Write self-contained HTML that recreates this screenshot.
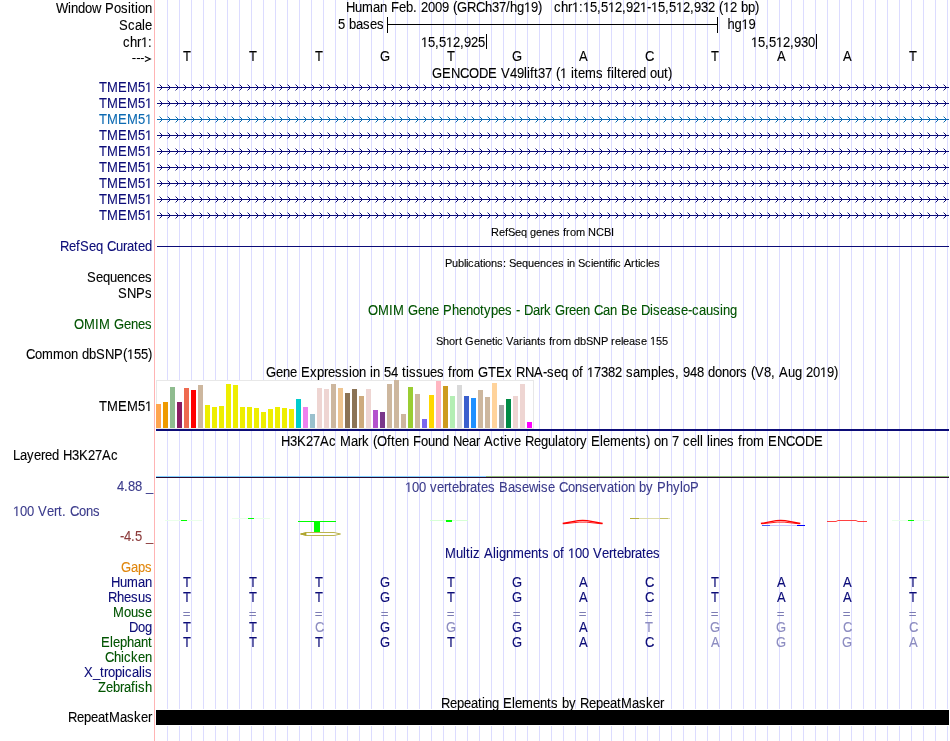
<!DOCTYPE html>
<html><head><meta charset="utf-8"><style>
html,body{margin:0;padding:0;background:#fff;width:950px;height:741px;overflow:hidden}
svg{display:block;will-change:transform}
text{font-family:"Liberation Sans",sans-serif}
</style></head><body>
<svg width="950" height="741" viewBox="0 0 950 741">
<path d="M167,0V380M167,429V709M167,726V741M179,0V380M179,429V709M179,726V741M191,0V380M191,429V709M191,726V741M203,0V380M203,429V709M203,726V741M215,0V380M215,429V709M215,726V741M227,0V380M227,429V709M227,726V741M239,0V380M239,429V709M239,726V741M251,0V380M251,429V709M251,726V741M263,0V380M263,429V709M263,726V741M275,0V380M275,429V709M275,726V741M287,0V380M287,429V709M287,726V741M299,0V380M299,429V709M299,726V741M311,0V380M311,429V709M311,726V741M323,0V380M323,429V709M323,726V741M335,0V380M335,429V709M335,726V741M347,0V380M347,429V709M347,726V741M359,0V380M359,429V709M359,726V741M371,0V380M371,429V709M371,726V741M383,0V380M383,429V709M383,726V741M395,0V380M395,429V709M395,726V741M407,0V380M407,429V709M407,726V741M419,0V380M419,429V709M419,726V741M431,0V380M431,429V709M431,726V741M443,0V380M443,429V709M443,726V741M455,0V380M455,429V709M455,726V741M467,0V380M467,429V709M467,726V741M479,0V380M479,429V709M479,726V741M491,0V380M491,429V709M491,726V741M503,0V380M503,429V709M503,726V741M515,0V380M515,429V709M515,726V741M527,0V380M527,429V709M527,726V741M539,0V709M539,726V741M551,0V709M551,726V741M563,0V709M563,726V741M575,0V709M575,726V741M587,0V709M587,726V741M599,0V709M599,726V741M611,0V709M611,726V741M623,0V709M623,726V741M635,0V709M635,726V741M647,0V709M647,726V741M659,0V709M659,726V741M671,0V709M671,726V741M683,0V709M683,726V741M695,0V709M695,726V741M707,0V709M707,726V741M719,0V709M719,726V741M731,0V709M731,726V741M743,0V709M743,726V741M755,0V709M755,726V741M767,0V709M767,726V741M779,0V709M779,726V741M791,0V709M791,726V741M803,0V709M803,726V741M815,0V709M815,726V741M827,0V709M827,726V741M839,0V709M839,726V741M851,0V709M851,726V741M863,0V709M863,726V741M875,0V709M875,726V741M887,0V709M887,726V741M899,0V709M899,726V741M911,0V709M911,726V741M923,0V709M923,726V741M935,0V709M935,726V741M947,0V709M947,726V741" transform="translate(0.5,0)" stroke="#dcdcff" stroke-width="1" fill="none"/>
<rect x="154" y="0" width="1" height="741" fill="#ffb4b4" />
<text x="56 68 71 78 85 92 101 105 114 121 128 131 135 138 145" y="13" font-size="13" fill="#000" stroke="#000" stroke-width="0.1" transform="matrix(1,0,0,1.07,0,-0.910)" >Window Position</text>
<text x="119 128 135 142 145" y="30" font-size="13" fill="#000" stroke="#000" stroke-width="0.1" transform="matrix(1,0,0,1.07,0,-2.100)" >Scale</text>
<path d="M515,0L515,1237L197,1010L197,1180L530,1409L696,1409L696,0Z" fill="#000" stroke="#000" stroke-width="15.75" transform="matrix(0.006348,0,0,-0.006792,141,47)"/>
<text x="123 130 137 148" y="47" font-size="13" fill="#000" stroke="#000" stroke-width="0.1" transform="matrix(1,0,0,1.07,0,-3.290)" >chr:</text>
<rect x="132.3" y="58" width="3.3" height="1.05" fill="#000" />
<rect x="136.8" y="58" width="3.2" height="1.05" fill="#000" />
<rect x="140.8" y="58" width="3.0" height="1.05" fill="#000" />
<path d="M144.9,56.4 L150.3,58.9 L144.9,61.4" fill="none" stroke="#000" stroke-width="1.15"/>
<path d="M515,0L515,1237L197,1010L197,1180L530,1409L696,1409L696,0Z" fill="#000" stroke="#000" stroke-width="15.75" transform="matrix(0.006348,0,0,-0.006792,524,12)"/>
<text x="346 355 362 373 380 387 391 399 406 413 417 421 428 435 442 449 453 457 467 476 485 492 499 506 510 517 531 538" y="12" font-size="13" fill="#000" stroke="#000" stroke-width="0.1" transform="matrix(1,0,0,1.07,0,-0.840)" >Human Feb. 2009 (GRCh37/hg9)</text>
<path d="M515,0L515,1237L197,1010L197,1180L530,1409L696,1409L696,0Z" fill="#000" stroke="#000" stroke-width="15.75" transform="matrix(0.006348,0,0,-0.006792,572,12)"/>
<path d="M515,0L515,1237L197,1010L197,1180L530,1409L696,1409L696,0Z" fill="#000" stroke="#000" stroke-width="15.75" transform="matrix(0.006348,0,0,-0.006792,583,12)"/>
<path d="M515,0L515,1237L197,1010L197,1180L530,1409L696,1409L696,0Z" fill="#000" stroke="#000" stroke-width="15.75" transform="matrix(0.006348,0,0,-0.006792,608,12)"/>
<path d="M515,0L515,1237L197,1010L197,1180L530,1409L696,1409L696,0Z" fill="#000" stroke="#000" stroke-width="15.75" transform="matrix(0.006348,0,0,-0.006792,640,12)"/>
<path d="M515,0L515,1237L197,1010L197,1180L530,1409L696,1409L696,0Z" fill="#000" stroke="#000" stroke-width="15.75" transform="matrix(0.006348,0,0,-0.006792,651,12)"/>
<path d="M515,0L515,1237L197,1010L197,1180L530,1409L696,1409L696,0Z" fill="#000" stroke="#000" stroke-width="15.75" transform="matrix(0.006348,0,0,-0.006792,676,12)"/>
<path d="M515,0L515,1237L197,1010L197,1180L530,1409L696,1409L696,0Z" fill="#000" stroke="#000" stroke-width="15.75" transform="matrix(0.006348,0,0,-0.006792,723,12)"/>
<text x="554 561 568 579 590 597 601 615 622 626 633 647 658 665 669 683 690 694 701 708 715 719 730 737 741 748 755" y="12" font-size="13" fill="#000" stroke="#000" stroke-width="0.1" transform="matrix(1,0,0,1.07,0,-0.840)" >chr:5,52,92-5,52,932 (2 bp)</text>
<text x="338 345 349 356 363 370 377" y="29" font-size="13" fill="#000" stroke="#000" stroke-width="0.1" transform="matrix(1,0,0,1.07,0,-2.030)" >5 bases</text>
<rect x="387" y="17" width="1" height="16" fill="#000" />
<rect x="387" y="24" width="331" height="1" fill="#000" />
<rect x="717" y="17" width="1" height="16" fill="#000" />
<path d="M515,0L515,1237L197,1010L197,1180L530,1409L696,1409L696,0Z" fill="#000" stroke="#000" stroke-width="15.75" transform="matrix(0.006348,0,0,-0.006792,741.5,29)"/>
<text x="727.5 734.5 748.5" y="29" font-size="13" fill="#000" stroke="#000" stroke-width="0.1" transform="matrix(1,0,0,1.07,0,-2.030)" >hg9</text>
<path d="M515,0L515,1237L197,1010L197,1180L530,1409L696,1409L696,0Z" fill="#000" stroke="#000" stroke-width="15.75" transform="matrix(0.006348,0,0,-0.006792,421,47)"/>
<path d="M515,0L515,1237L197,1010L197,1180L530,1409L696,1409L696,0Z" fill="#000" stroke="#000" stroke-width="15.75" transform="matrix(0.006348,0,0,-0.006792,446,47)"/>
<text x="428 435 439 453 460 464 471 478" y="47" font-size="13" fill="#000" stroke="#000" stroke-width="0.1" transform="matrix(1,0,0,1.07,0,-3.290)" >5,52,925</text>
<rect x="486" y="34" width="1" height="15" fill="#000" />
<path d="M515,0L515,1237L197,1010L197,1180L530,1409L696,1409L696,0Z" fill="#000" stroke="#000" stroke-width="15.75" transform="matrix(0.006348,0,0,-0.006792,751,47)"/>
<path d="M515,0L515,1237L197,1010L197,1180L530,1409L696,1409L696,0Z" fill="#000" stroke="#000" stroke-width="15.75" transform="matrix(0.006348,0,0,-0.006792,776,47)"/>
<text x="758 765 769 783 790 794 801 808" y="47" font-size="13" fill="#000" stroke="#000" stroke-width="0.1" transform="matrix(1,0,0,1.07,0,-3.290)" >5,52,930</text>
<rect x="816" y="34" width="1" height="15" fill="#000" />
<text x="183" y="61" font-size="13" fill="#000" stroke="#000" stroke-width="0.1" transform="matrix(1,0,0,1.07,0,-4.270)" >T</text>
<text x="249" y="61" font-size="13" fill="#000" stroke="#000" stroke-width="0.1" transform="matrix(1,0,0,1.07,0,-4.270)" >T</text>
<text x="315" y="61" font-size="13" fill="#000" stroke="#000" stroke-width="0.1" transform="matrix(1,0,0,1.07,0,-4.270)" >T</text>
<text x="380" y="61" font-size="13" fill="#000" stroke="#000" stroke-width="0.1" transform="matrix(1,0,0,1.07,0,-4.270)" >G</text>
<text x="447" y="61" font-size="13" fill="#000" stroke="#000" stroke-width="0.1" transform="matrix(1,0,0,1.07,0,-4.270)" >T</text>
<text x="512" y="61" font-size="13" fill="#000" stroke="#000" stroke-width="0.1" transform="matrix(1,0,0,1.07,0,-4.270)" >G</text>
<text x="579" y="61" font-size="13" fill="#000" stroke="#000" stroke-width="0.1" transform="matrix(1,0,0,1.07,0,-4.270)" >A</text>
<text x="645" y="61" font-size="13" fill="#000" stroke="#000" stroke-width="0.1" transform="matrix(1,0,0,1.07,0,-4.270)" >C</text>
<text x="711" y="61" font-size="13" fill="#000" stroke="#000" stroke-width="0.1" transform="matrix(1,0,0,1.07,0,-4.270)" >T</text>
<text x="777" y="61" font-size="13" fill="#000" stroke="#000" stroke-width="0.1" transform="matrix(1,0,0,1.07,0,-4.270)" >A</text>
<text x="843" y="61" font-size="13" fill="#000" stroke="#000" stroke-width="0.1" transform="matrix(1,0,0,1.07,0,-4.270)" >A</text>
<text x="909" y="61" font-size="13" fill="#000" stroke="#000" stroke-width="0.1" transform="matrix(1,0,0,1.07,0,-4.270)" >T</text>
<path d="M515,0L515,1237L197,1010L197,1180L530,1409L696,1409L696,0Z" fill="#000" stroke="#000" stroke-width="15.75" transform="matrix(0.006348,0,0,-0.006792,560,78)"/>
<text x="432 442 451 460 469 479 488 497 501 510 517 524 527 530 534 538 545 552 556 567 571 574 578 585 596 603 607 611 614 617 621 628 632 639 646 650 657 664 668" y="78" font-size="13" fill="#000" stroke="#000" stroke-width="0.1" transform="matrix(1,0,0,1.07,0,-5.460)" >GENCODE V49lift37 ( items filtered out)</text>
<path d="M515,0L515,1237L197,1010L197,1180L530,1409L696,1409L696,0Z" fill="#0c0c78" stroke="#0c0c78" stroke-width="15.75" transform="matrix(0.006348,0,0,-0.006792,145,92)"/>
<text x="99 107 118 127 138" y="92" font-size="13" fill="#0c0c78" stroke="#0c0c78" stroke-width="0.1" transform="matrix(1,0,0,1.07,0,-6.440)" >TMEM5</text>
<rect x="157" y="87" width="792" height="1" fill="#0c0c78" />
<path d="M160,85h1v1h-1zM161,86h1v3h-1zM160,89h1v1h-1zM168,85h1v1h-1zM169,86h1v3h-1zM168,89h1v1h-1zM176,85h1v1h-1zM177,86h1v3h-1zM176,89h1v1h-1zM184,85h1v1h-1zM185,86h1v3h-1zM184,89h1v1h-1zM192,85h1v1h-1zM193,86h1v3h-1zM192,89h1v1h-1zM200,85h1v1h-1zM201,86h1v3h-1zM200,89h1v1h-1zM208,85h1v1h-1zM209,86h1v3h-1zM208,89h1v1h-1zM216,85h1v1h-1zM217,86h1v3h-1zM216,89h1v1h-1zM224,85h1v1h-1zM225,86h1v3h-1zM224,89h1v1h-1zM232,85h1v1h-1zM233,86h1v3h-1zM232,89h1v1h-1zM240,85h1v1h-1zM241,86h1v3h-1zM240,89h1v1h-1zM248,85h1v1h-1zM249,86h1v3h-1zM248,89h1v1h-1zM256,85h1v1h-1zM257,86h1v3h-1zM256,89h1v1h-1zM264,85h1v1h-1zM265,86h1v3h-1zM264,89h1v1h-1zM272,85h1v1h-1zM273,86h1v3h-1zM272,89h1v1h-1zM280,85h1v1h-1zM281,86h1v3h-1zM280,89h1v1h-1zM288,85h1v1h-1zM289,86h1v3h-1zM288,89h1v1h-1zM296,85h1v1h-1zM297,86h1v3h-1zM296,89h1v1h-1zM304,85h1v1h-1zM305,86h1v3h-1zM304,89h1v1h-1zM312,85h1v1h-1zM313,86h1v3h-1zM312,89h1v1h-1zM320,85h1v1h-1zM321,86h1v3h-1zM320,89h1v1h-1zM328,85h1v1h-1zM329,86h1v3h-1zM328,89h1v1h-1zM336,85h1v1h-1zM337,86h1v3h-1zM336,89h1v1h-1zM344,85h1v1h-1zM345,86h1v3h-1zM344,89h1v1h-1zM352,85h1v1h-1zM353,86h1v3h-1zM352,89h1v1h-1zM360,85h1v1h-1zM361,86h1v3h-1zM360,89h1v1h-1zM368,85h1v1h-1zM369,86h1v3h-1zM368,89h1v1h-1zM376,85h1v1h-1zM377,86h1v3h-1zM376,89h1v1h-1zM384,85h1v1h-1zM385,86h1v3h-1zM384,89h1v1h-1zM392,85h1v1h-1zM393,86h1v3h-1zM392,89h1v1h-1zM400,85h1v1h-1zM401,86h1v3h-1zM400,89h1v1h-1zM408,85h1v1h-1zM409,86h1v3h-1zM408,89h1v1h-1zM416,85h1v1h-1zM417,86h1v3h-1zM416,89h1v1h-1zM424,85h1v1h-1zM425,86h1v3h-1zM424,89h1v1h-1zM432,85h1v1h-1zM433,86h1v3h-1zM432,89h1v1h-1zM440,85h1v1h-1zM441,86h1v3h-1zM440,89h1v1h-1zM448,85h1v1h-1zM449,86h1v3h-1zM448,89h1v1h-1zM456,85h1v1h-1zM457,86h1v3h-1zM456,89h1v1h-1zM464,85h1v1h-1zM465,86h1v3h-1zM464,89h1v1h-1zM472,85h1v1h-1zM473,86h1v3h-1zM472,89h1v1h-1zM480,85h1v1h-1zM481,86h1v3h-1zM480,89h1v1h-1zM488,85h1v1h-1zM489,86h1v3h-1zM488,89h1v1h-1zM496,85h1v1h-1zM497,86h1v3h-1zM496,89h1v1h-1zM504,85h1v1h-1zM505,86h1v3h-1zM504,89h1v1h-1zM512,85h1v1h-1zM513,86h1v3h-1zM512,89h1v1h-1zM520,85h1v1h-1zM521,86h1v3h-1zM520,89h1v1h-1zM528,85h1v1h-1zM529,86h1v3h-1zM528,89h1v1h-1zM536,85h1v1h-1zM537,86h1v3h-1zM536,89h1v1h-1zM544,85h1v1h-1zM545,86h1v3h-1zM544,89h1v1h-1zM552,85h1v1h-1zM553,86h1v3h-1zM552,89h1v1h-1zM560,85h1v1h-1zM561,86h1v3h-1zM560,89h1v1h-1zM568,85h1v1h-1zM569,86h1v3h-1zM568,89h1v1h-1zM576,85h1v1h-1zM577,86h1v3h-1zM576,89h1v1h-1zM584,85h1v1h-1zM585,86h1v3h-1zM584,89h1v1h-1zM592,85h1v1h-1zM593,86h1v3h-1zM592,89h1v1h-1zM600,85h1v1h-1zM601,86h1v3h-1zM600,89h1v1h-1zM608,85h1v1h-1zM609,86h1v3h-1zM608,89h1v1h-1zM616,85h1v1h-1zM617,86h1v3h-1zM616,89h1v1h-1zM624,85h1v1h-1zM625,86h1v3h-1zM624,89h1v1h-1zM632,85h1v1h-1zM633,86h1v3h-1zM632,89h1v1h-1zM640,85h1v1h-1zM641,86h1v3h-1zM640,89h1v1h-1zM648,85h1v1h-1zM649,86h1v3h-1zM648,89h1v1h-1zM656,85h1v1h-1zM657,86h1v3h-1zM656,89h1v1h-1zM664,85h1v1h-1zM665,86h1v3h-1zM664,89h1v1h-1zM672,85h1v1h-1zM673,86h1v3h-1zM672,89h1v1h-1zM680,85h1v1h-1zM681,86h1v3h-1zM680,89h1v1h-1zM688,85h1v1h-1zM689,86h1v3h-1zM688,89h1v1h-1zM696,85h1v1h-1zM697,86h1v3h-1zM696,89h1v1h-1zM704,85h1v1h-1zM705,86h1v3h-1zM704,89h1v1h-1zM712,85h1v1h-1zM713,86h1v3h-1zM712,89h1v1h-1zM720,85h1v1h-1zM721,86h1v3h-1zM720,89h1v1h-1zM728,85h1v1h-1zM729,86h1v3h-1zM728,89h1v1h-1zM736,85h1v1h-1zM737,86h1v3h-1zM736,89h1v1h-1zM744,85h1v1h-1zM745,86h1v3h-1zM744,89h1v1h-1zM752,85h1v1h-1zM753,86h1v3h-1zM752,89h1v1h-1zM760,85h1v1h-1zM761,86h1v3h-1zM760,89h1v1h-1zM768,85h1v1h-1zM769,86h1v3h-1zM768,89h1v1h-1zM776,85h1v1h-1zM777,86h1v3h-1zM776,89h1v1h-1zM784,85h1v1h-1zM785,86h1v3h-1zM784,89h1v1h-1zM792,85h1v1h-1zM793,86h1v3h-1zM792,89h1v1h-1zM800,85h1v1h-1zM801,86h1v3h-1zM800,89h1v1h-1zM808,85h1v1h-1zM809,86h1v3h-1zM808,89h1v1h-1zM816,85h1v1h-1zM817,86h1v3h-1zM816,89h1v1h-1zM824,85h1v1h-1zM825,86h1v3h-1zM824,89h1v1h-1zM832,85h1v1h-1zM833,86h1v3h-1zM832,89h1v1h-1zM840,85h1v1h-1zM841,86h1v3h-1zM840,89h1v1h-1zM848,85h1v1h-1zM849,86h1v3h-1zM848,89h1v1h-1zM856,85h1v1h-1zM857,86h1v3h-1zM856,89h1v1h-1zM864,85h1v1h-1zM865,86h1v3h-1zM864,89h1v1h-1zM872,85h1v1h-1zM873,86h1v3h-1zM872,89h1v1h-1zM880,85h1v1h-1zM881,86h1v3h-1zM880,89h1v1h-1zM888,85h1v1h-1zM889,86h1v3h-1zM888,89h1v1h-1zM896,85h1v1h-1zM897,86h1v3h-1zM896,89h1v1h-1zM904,85h1v1h-1zM905,86h1v3h-1zM904,89h1v1h-1zM912,85h1v1h-1zM913,86h1v3h-1zM912,89h1v1h-1zM920,85h1v1h-1zM921,86h1v3h-1zM920,89h1v1h-1zM928,85h1v1h-1zM929,86h1v3h-1zM928,89h1v1h-1zM936,85h1v1h-1zM937,86h1v3h-1zM936,89h1v1h-1zM944,85h1v1h-1zM945,86h1v3h-1zM944,89h1v1h-1z" fill="#0c0c78"/>
<path d="M159,84h1v1h-1zM159,90h1v1h-1zM167,84h1v1h-1zM167,90h1v1h-1zM175,84h1v1h-1zM175,90h1v1h-1zM183,84h1v1h-1zM183,90h1v1h-1zM191,84h1v1h-1zM191,90h1v1h-1zM199,84h1v1h-1zM199,90h1v1h-1zM207,84h1v1h-1zM207,90h1v1h-1zM215,84h1v1h-1zM215,90h1v1h-1zM223,84h1v1h-1zM223,90h1v1h-1zM231,84h1v1h-1zM231,90h1v1h-1zM239,84h1v1h-1zM239,90h1v1h-1zM247,84h1v1h-1zM247,90h1v1h-1zM255,84h1v1h-1zM255,90h1v1h-1zM263,84h1v1h-1zM263,90h1v1h-1zM271,84h1v1h-1zM271,90h1v1h-1zM279,84h1v1h-1zM279,90h1v1h-1zM287,84h1v1h-1zM287,90h1v1h-1zM295,84h1v1h-1zM295,90h1v1h-1zM303,84h1v1h-1zM303,90h1v1h-1zM311,84h1v1h-1zM311,90h1v1h-1zM319,84h1v1h-1zM319,90h1v1h-1zM327,84h1v1h-1zM327,90h1v1h-1zM335,84h1v1h-1zM335,90h1v1h-1zM343,84h1v1h-1zM343,90h1v1h-1zM351,84h1v1h-1zM351,90h1v1h-1zM359,84h1v1h-1zM359,90h1v1h-1zM367,84h1v1h-1zM367,90h1v1h-1zM375,84h1v1h-1zM375,90h1v1h-1zM383,84h1v1h-1zM383,90h1v1h-1zM391,84h1v1h-1zM391,90h1v1h-1zM399,84h1v1h-1zM399,90h1v1h-1zM407,84h1v1h-1zM407,90h1v1h-1zM415,84h1v1h-1zM415,90h1v1h-1zM423,84h1v1h-1zM423,90h1v1h-1zM431,84h1v1h-1zM431,90h1v1h-1zM439,84h1v1h-1zM439,90h1v1h-1zM447,84h1v1h-1zM447,90h1v1h-1zM455,84h1v1h-1zM455,90h1v1h-1zM463,84h1v1h-1zM463,90h1v1h-1zM471,84h1v1h-1zM471,90h1v1h-1zM479,84h1v1h-1zM479,90h1v1h-1zM487,84h1v1h-1zM487,90h1v1h-1zM495,84h1v1h-1zM495,90h1v1h-1zM503,84h1v1h-1zM503,90h1v1h-1zM511,84h1v1h-1zM511,90h1v1h-1zM519,84h1v1h-1zM519,90h1v1h-1zM527,84h1v1h-1zM527,90h1v1h-1zM535,84h1v1h-1zM535,90h1v1h-1zM543,84h1v1h-1zM543,90h1v1h-1zM551,84h1v1h-1zM551,90h1v1h-1zM559,84h1v1h-1zM559,90h1v1h-1zM567,84h1v1h-1zM567,90h1v1h-1zM575,84h1v1h-1zM575,90h1v1h-1zM583,84h1v1h-1zM583,90h1v1h-1zM591,84h1v1h-1zM591,90h1v1h-1zM599,84h1v1h-1zM599,90h1v1h-1zM607,84h1v1h-1zM607,90h1v1h-1zM615,84h1v1h-1zM615,90h1v1h-1zM623,84h1v1h-1zM623,90h1v1h-1zM631,84h1v1h-1zM631,90h1v1h-1zM639,84h1v1h-1zM639,90h1v1h-1zM647,84h1v1h-1zM647,90h1v1h-1zM655,84h1v1h-1zM655,90h1v1h-1zM663,84h1v1h-1zM663,90h1v1h-1zM671,84h1v1h-1zM671,90h1v1h-1zM679,84h1v1h-1zM679,90h1v1h-1zM687,84h1v1h-1zM687,90h1v1h-1zM695,84h1v1h-1zM695,90h1v1h-1zM703,84h1v1h-1zM703,90h1v1h-1zM711,84h1v1h-1zM711,90h1v1h-1zM719,84h1v1h-1zM719,90h1v1h-1zM727,84h1v1h-1zM727,90h1v1h-1zM735,84h1v1h-1zM735,90h1v1h-1zM743,84h1v1h-1zM743,90h1v1h-1zM751,84h1v1h-1zM751,90h1v1h-1zM759,84h1v1h-1zM759,90h1v1h-1zM767,84h1v1h-1zM767,90h1v1h-1zM775,84h1v1h-1zM775,90h1v1h-1zM783,84h1v1h-1zM783,90h1v1h-1zM791,84h1v1h-1zM791,90h1v1h-1zM799,84h1v1h-1zM799,90h1v1h-1zM807,84h1v1h-1zM807,90h1v1h-1zM815,84h1v1h-1zM815,90h1v1h-1zM823,84h1v1h-1zM823,90h1v1h-1zM831,84h1v1h-1zM831,90h1v1h-1zM839,84h1v1h-1zM839,90h1v1h-1zM847,84h1v1h-1zM847,90h1v1h-1zM855,84h1v1h-1zM855,90h1v1h-1zM863,84h1v1h-1zM863,90h1v1h-1zM871,84h1v1h-1zM871,90h1v1h-1zM879,84h1v1h-1zM879,90h1v1h-1zM887,84h1v1h-1zM887,90h1v1h-1zM895,84h1v1h-1zM895,90h1v1h-1zM903,84h1v1h-1zM903,90h1v1h-1zM911,84h1v1h-1zM911,90h1v1h-1zM919,84h1v1h-1zM919,90h1v1h-1zM927,84h1v1h-1zM927,90h1v1h-1zM935,84h1v1h-1zM935,90h1v1h-1zM943,84h1v1h-1zM943,90h1v1h-1z" fill="#0c0c78" fill-opacity="0.45"/>
<path d="M515,0L515,1237L197,1010L197,1180L530,1409L696,1409L696,0Z" fill="#0c0c78" stroke="#0c0c78" stroke-width="15.75" transform="matrix(0.006348,0,0,-0.006792,145,108)"/>
<text x="99 107 118 127 138" y="108" font-size="13" fill="#0c0c78" stroke="#0c0c78" stroke-width="0.1" transform="matrix(1,0,0,1.07,0,-7.560)" >TMEM5</text>
<rect x="157" y="103" width="792" height="1" fill="#0c0c78" />
<path d="M160,101h1v1h-1zM161,102h1v3h-1zM160,105h1v1h-1zM168,101h1v1h-1zM169,102h1v3h-1zM168,105h1v1h-1zM176,101h1v1h-1zM177,102h1v3h-1zM176,105h1v1h-1zM184,101h1v1h-1zM185,102h1v3h-1zM184,105h1v1h-1zM192,101h1v1h-1zM193,102h1v3h-1zM192,105h1v1h-1zM200,101h1v1h-1zM201,102h1v3h-1zM200,105h1v1h-1zM208,101h1v1h-1zM209,102h1v3h-1zM208,105h1v1h-1zM216,101h1v1h-1zM217,102h1v3h-1zM216,105h1v1h-1zM224,101h1v1h-1zM225,102h1v3h-1zM224,105h1v1h-1zM232,101h1v1h-1zM233,102h1v3h-1zM232,105h1v1h-1zM240,101h1v1h-1zM241,102h1v3h-1zM240,105h1v1h-1zM248,101h1v1h-1zM249,102h1v3h-1zM248,105h1v1h-1zM256,101h1v1h-1zM257,102h1v3h-1zM256,105h1v1h-1zM264,101h1v1h-1zM265,102h1v3h-1zM264,105h1v1h-1zM272,101h1v1h-1zM273,102h1v3h-1zM272,105h1v1h-1zM280,101h1v1h-1zM281,102h1v3h-1zM280,105h1v1h-1zM288,101h1v1h-1zM289,102h1v3h-1zM288,105h1v1h-1zM296,101h1v1h-1zM297,102h1v3h-1zM296,105h1v1h-1zM304,101h1v1h-1zM305,102h1v3h-1zM304,105h1v1h-1zM312,101h1v1h-1zM313,102h1v3h-1zM312,105h1v1h-1zM320,101h1v1h-1zM321,102h1v3h-1zM320,105h1v1h-1zM328,101h1v1h-1zM329,102h1v3h-1zM328,105h1v1h-1zM336,101h1v1h-1zM337,102h1v3h-1zM336,105h1v1h-1zM344,101h1v1h-1zM345,102h1v3h-1zM344,105h1v1h-1zM352,101h1v1h-1zM353,102h1v3h-1zM352,105h1v1h-1zM360,101h1v1h-1zM361,102h1v3h-1zM360,105h1v1h-1zM368,101h1v1h-1zM369,102h1v3h-1zM368,105h1v1h-1zM376,101h1v1h-1zM377,102h1v3h-1zM376,105h1v1h-1zM384,101h1v1h-1zM385,102h1v3h-1zM384,105h1v1h-1zM392,101h1v1h-1zM393,102h1v3h-1zM392,105h1v1h-1zM400,101h1v1h-1zM401,102h1v3h-1zM400,105h1v1h-1zM408,101h1v1h-1zM409,102h1v3h-1zM408,105h1v1h-1zM416,101h1v1h-1zM417,102h1v3h-1zM416,105h1v1h-1zM424,101h1v1h-1zM425,102h1v3h-1zM424,105h1v1h-1zM432,101h1v1h-1zM433,102h1v3h-1zM432,105h1v1h-1zM440,101h1v1h-1zM441,102h1v3h-1zM440,105h1v1h-1zM448,101h1v1h-1zM449,102h1v3h-1zM448,105h1v1h-1zM456,101h1v1h-1zM457,102h1v3h-1zM456,105h1v1h-1zM464,101h1v1h-1zM465,102h1v3h-1zM464,105h1v1h-1zM472,101h1v1h-1zM473,102h1v3h-1zM472,105h1v1h-1zM480,101h1v1h-1zM481,102h1v3h-1zM480,105h1v1h-1zM488,101h1v1h-1zM489,102h1v3h-1zM488,105h1v1h-1zM496,101h1v1h-1zM497,102h1v3h-1zM496,105h1v1h-1zM504,101h1v1h-1zM505,102h1v3h-1zM504,105h1v1h-1zM512,101h1v1h-1zM513,102h1v3h-1zM512,105h1v1h-1zM520,101h1v1h-1zM521,102h1v3h-1zM520,105h1v1h-1zM528,101h1v1h-1zM529,102h1v3h-1zM528,105h1v1h-1zM536,101h1v1h-1zM537,102h1v3h-1zM536,105h1v1h-1zM544,101h1v1h-1zM545,102h1v3h-1zM544,105h1v1h-1zM552,101h1v1h-1zM553,102h1v3h-1zM552,105h1v1h-1zM560,101h1v1h-1zM561,102h1v3h-1zM560,105h1v1h-1zM568,101h1v1h-1zM569,102h1v3h-1zM568,105h1v1h-1zM576,101h1v1h-1zM577,102h1v3h-1zM576,105h1v1h-1zM584,101h1v1h-1zM585,102h1v3h-1zM584,105h1v1h-1zM592,101h1v1h-1zM593,102h1v3h-1zM592,105h1v1h-1zM600,101h1v1h-1zM601,102h1v3h-1zM600,105h1v1h-1zM608,101h1v1h-1zM609,102h1v3h-1zM608,105h1v1h-1zM616,101h1v1h-1zM617,102h1v3h-1zM616,105h1v1h-1zM624,101h1v1h-1zM625,102h1v3h-1zM624,105h1v1h-1zM632,101h1v1h-1zM633,102h1v3h-1zM632,105h1v1h-1zM640,101h1v1h-1zM641,102h1v3h-1zM640,105h1v1h-1zM648,101h1v1h-1zM649,102h1v3h-1zM648,105h1v1h-1zM656,101h1v1h-1zM657,102h1v3h-1zM656,105h1v1h-1zM664,101h1v1h-1zM665,102h1v3h-1zM664,105h1v1h-1zM672,101h1v1h-1zM673,102h1v3h-1zM672,105h1v1h-1zM680,101h1v1h-1zM681,102h1v3h-1zM680,105h1v1h-1zM688,101h1v1h-1zM689,102h1v3h-1zM688,105h1v1h-1zM696,101h1v1h-1zM697,102h1v3h-1zM696,105h1v1h-1zM704,101h1v1h-1zM705,102h1v3h-1zM704,105h1v1h-1zM712,101h1v1h-1zM713,102h1v3h-1zM712,105h1v1h-1zM720,101h1v1h-1zM721,102h1v3h-1zM720,105h1v1h-1zM728,101h1v1h-1zM729,102h1v3h-1zM728,105h1v1h-1zM736,101h1v1h-1zM737,102h1v3h-1zM736,105h1v1h-1zM744,101h1v1h-1zM745,102h1v3h-1zM744,105h1v1h-1zM752,101h1v1h-1zM753,102h1v3h-1zM752,105h1v1h-1zM760,101h1v1h-1zM761,102h1v3h-1zM760,105h1v1h-1zM768,101h1v1h-1zM769,102h1v3h-1zM768,105h1v1h-1zM776,101h1v1h-1zM777,102h1v3h-1zM776,105h1v1h-1zM784,101h1v1h-1zM785,102h1v3h-1zM784,105h1v1h-1zM792,101h1v1h-1zM793,102h1v3h-1zM792,105h1v1h-1zM800,101h1v1h-1zM801,102h1v3h-1zM800,105h1v1h-1zM808,101h1v1h-1zM809,102h1v3h-1zM808,105h1v1h-1zM816,101h1v1h-1zM817,102h1v3h-1zM816,105h1v1h-1zM824,101h1v1h-1zM825,102h1v3h-1zM824,105h1v1h-1zM832,101h1v1h-1zM833,102h1v3h-1zM832,105h1v1h-1zM840,101h1v1h-1zM841,102h1v3h-1zM840,105h1v1h-1zM848,101h1v1h-1zM849,102h1v3h-1zM848,105h1v1h-1zM856,101h1v1h-1zM857,102h1v3h-1zM856,105h1v1h-1zM864,101h1v1h-1zM865,102h1v3h-1zM864,105h1v1h-1zM872,101h1v1h-1zM873,102h1v3h-1zM872,105h1v1h-1zM880,101h1v1h-1zM881,102h1v3h-1zM880,105h1v1h-1zM888,101h1v1h-1zM889,102h1v3h-1zM888,105h1v1h-1zM896,101h1v1h-1zM897,102h1v3h-1zM896,105h1v1h-1zM904,101h1v1h-1zM905,102h1v3h-1zM904,105h1v1h-1zM912,101h1v1h-1zM913,102h1v3h-1zM912,105h1v1h-1zM920,101h1v1h-1zM921,102h1v3h-1zM920,105h1v1h-1zM928,101h1v1h-1zM929,102h1v3h-1zM928,105h1v1h-1zM936,101h1v1h-1zM937,102h1v3h-1zM936,105h1v1h-1zM944,101h1v1h-1zM945,102h1v3h-1zM944,105h1v1h-1z" fill="#0c0c78"/>
<path d="M159,100h1v1h-1zM159,106h1v1h-1zM167,100h1v1h-1zM167,106h1v1h-1zM175,100h1v1h-1zM175,106h1v1h-1zM183,100h1v1h-1zM183,106h1v1h-1zM191,100h1v1h-1zM191,106h1v1h-1zM199,100h1v1h-1zM199,106h1v1h-1zM207,100h1v1h-1zM207,106h1v1h-1zM215,100h1v1h-1zM215,106h1v1h-1zM223,100h1v1h-1zM223,106h1v1h-1zM231,100h1v1h-1zM231,106h1v1h-1zM239,100h1v1h-1zM239,106h1v1h-1zM247,100h1v1h-1zM247,106h1v1h-1zM255,100h1v1h-1zM255,106h1v1h-1zM263,100h1v1h-1zM263,106h1v1h-1zM271,100h1v1h-1zM271,106h1v1h-1zM279,100h1v1h-1zM279,106h1v1h-1zM287,100h1v1h-1zM287,106h1v1h-1zM295,100h1v1h-1zM295,106h1v1h-1zM303,100h1v1h-1zM303,106h1v1h-1zM311,100h1v1h-1zM311,106h1v1h-1zM319,100h1v1h-1zM319,106h1v1h-1zM327,100h1v1h-1zM327,106h1v1h-1zM335,100h1v1h-1zM335,106h1v1h-1zM343,100h1v1h-1zM343,106h1v1h-1zM351,100h1v1h-1zM351,106h1v1h-1zM359,100h1v1h-1zM359,106h1v1h-1zM367,100h1v1h-1zM367,106h1v1h-1zM375,100h1v1h-1zM375,106h1v1h-1zM383,100h1v1h-1zM383,106h1v1h-1zM391,100h1v1h-1zM391,106h1v1h-1zM399,100h1v1h-1zM399,106h1v1h-1zM407,100h1v1h-1zM407,106h1v1h-1zM415,100h1v1h-1zM415,106h1v1h-1zM423,100h1v1h-1zM423,106h1v1h-1zM431,100h1v1h-1zM431,106h1v1h-1zM439,100h1v1h-1zM439,106h1v1h-1zM447,100h1v1h-1zM447,106h1v1h-1zM455,100h1v1h-1zM455,106h1v1h-1zM463,100h1v1h-1zM463,106h1v1h-1zM471,100h1v1h-1zM471,106h1v1h-1zM479,100h1v1h-1zM479,106h1v1h-1zM487,100h1v1h-1zM487,106h1v1h-1zM495,100h1v1h-1zM495,106h1v1h-1zM503,100h1v1h-1zM503,106h1v1h-1zM511,100h1v1h-1zM511,106h1v1h-1zM519,100h1v1h-1zM519,106h1v1h-1zM527,100h1v1h-1zM527,106h1v1h-1zM535,100h1v1h-1zM535,106h1v1h-1zM543,100h1v1h-1zM543,106h1v1h-1zM551,100h1v1h-1zM551,106h1v1h-1zM559,100h1v1h-1zM559,106h1v1h-1zM567,100h1v1h-1zM567,106h1v1h-1zM575,100h1v1h-1zM575,106h1v1h-1zM583,100h1v1h-1zM583,106h1v1h-1zM591,100h1v1h-1zM591,106h1v1h-1zM599,100h1v1h-1zM599,106h1v1h-1zM607,100h1v1h-1zM607,106h1v1h-1zM615,100h1v1h-1zM615,106h1v1h-1zM623,100h1v1h-1zM623,106h1v1h-1zM631,100h1v1h-1zM631,106h1v1h-1zM639,100h1v1h-1zM639,106h1v1h-1zM647,100h1v1h-1zM647,106h1v1h-1zM655,100h1v1h-1zM655,106h1v1h-1zM663,100h1v1h-1zM663,106h1v1h-1zM671,100h1v1h-1zM671,106h1v1h-1zM679,100h1v1h-1zM679,106h1v1h-1zM687,100h1v1h-1zM687,106h1v1h-1zM695,100h1v1h-1zM695,106h1v1h-1zM703,100h1v1h-1zM703,106h1v1h-1zM711,100h1v1h-1zM711,106h1v1h-1zM719,100h1v1h-1zM719,106h1v1h-1zM727,100h1v1h-1zM727,106h1v1h-1zM735,100h1v1h-1zM735,106h1v1h-1zM743,100h1v1h-1zM743,106h1v1h-1zM751,100h1v1h-1zM751,106h1v1h-1zM759,100h1v1h-1zM759,106h1v1h-1zM767,100h1v1h-1zM767,106h1v1h-1zM775,100h1v1h-1zM775,106h1v1h-1zM783,100h1v1h-1zM783,106h1v1h-1zM791,100h1v1h-1zM791,106h1v1h-1zM799,100h1v1h-1zM799,106h1v1h-1zM807,100h1v1h-1zM807,106h1v1h-1zM815,100h1v1h-1zM815,106h1v1h-1zM823,100h1v1h-1zM823,106h1v1h-1zM831,100h1v1h-1zM831,106h1v1h-1zM839,100h1v1h-1zM839,106h1v1h-1zM847,100h1v1h-1zM847,106h1v1h-1zM855,100h1v1h-1zM855,106h1v1h-1zM863,100h1v1h-1zM863,106h1v1h-1zM871,100h1v1h-1zM871,106h1v1h-1zM879,100h1v1h-1zM879,106h1v1h-1zM887,100h1v1h-1zM887,106h1v1h-1zM895,100h1v1h-1zM895,106h1v1h-1zM903,100h1v1h-1zM903,106h1v1h-1zM911,100h1v1h-1zM911,106h1v1h-1zM919,100h1v1h-1zM919,106h1v1h-1zM927,100h1v1h-1zM927,106h1v1h-1zM935,100h1v1h-1zM935,106h1v1h-1zM943,100h1v1h-1zM943,106h1v1h-1z" fill="#0c0c78" fill-opacity="0.45"/>
<path d="M515,0L515,1237L197,1010L197,1180L530,1409L696,1409L696,0Z" fill="#0c6ab2" stroke="#0c6ab2" stroke-width="15.75" transform="matrix(0.006348,0,0,-0.006792,145,124)"/>
<text x="99 107 118 127 138" y="124" font-size="13" fill="#0c6ab2" stroke="#0c6ab2" stroke-width="0.1" transform="matrix(1,0,0,1.07,0,-8.680)" >TMEM5</text>
<rect x="157" y="119" width="792" height="1" fill="#0c6ab2" />
<path d="M160,117h1v1h-1zM161,118h1v3h-1zM160,121h1v1h-1zM168,117h1v1h-1zM169,118h1v3h-1zM168,121h1v1h-1zM176,117h1v1h-1zM177,118h1v3h-1zM176,121h1v1h-1zM184,117h1v1h-1zM185,118h1v3h-1zM184,121h1v1h-1zM192,117h1v1h-1zM193,118h1v3h-1zM192,121h1v1h-1zM200,117h1v1h-1zM201,118h1v3h-1zM200,121h1v1h-1zM208,117h1v1h-1zM209,118h1v3h-1zM208,121h1v1h-1zM216,117h1v1h-1zM217,118h1v3h-1zM216,121h1v1h-1zM224,117h1v1h-1zM225,118h1v3h-1zM224,121h1v1h-1zM232,117h1v1h-1zM233,118h1v3h-1zM232,121h1v1h-1zM240,117h1v1h-1zM241,118h1v3h-1zM240,121h1v1h-1zM248,117h1v1h-1zM249,118h1v3h-1zM248,121h1v1h-1zM256,117h1v1h-1zM257,118h1v3h-1zM256,121h1v1h-1zM264,117h1v1h-1zM265,118h1v3h-1zM264,121h1v1h-1zM272,117h1v1h-1zM273,118h1v3h-1zM272,121h1v1h-1zM280,117h1v1h-1zM281,118h1v3h-1zM280,121h1v1h-1zM288,117h1v1h-1zM289,118h1v3h-1zM288,121h1v1h-1zM296,117h1v1h-1zM297,118h1v3h-1zM296,121h1v1h-1zM304,117h1v1h-1zM305,118h1v3h-1zM304,121h1v1h-1zM312,117h1v1h-1zM313,118h1v3h-1zM312,121h1v1h-1zM320,117h1v1h-1zM321,118h1v3h-1zM320,121h1v1h-1zM328,117h1v1h-1zM329,118h1v3h-1zM328,121h1v1h-1zM336,117h1v1h-1zM337,118h1v3h-1zM336,121h1v1h-1zM344,117h1v1h-1zM345,118h1v3h-1zM344,121h1v1h-1zM352,117h1v1h-1zM353,118h1v3h-1zM352,121h1v1h-1zM360,117h1v1h-1zM361,118h1v3h-1zM360,121h1v1h-1zM368,117h1v1h-1zM369,118h1v3h-1zM368,121h1v1h-1zM376,117h1v1h-1zM377,118h1v3h-1zM376,121h1v1h-1zM384,117h1v1h-1zM385,118h1v3h-1zM384,121h1v1h-1zM392,117h1v1h-1zM393,118h1v3h-1zM392,121h1v1h-1zM400,117h1v1h-1zM401,118h1v3h-1zM400,121h1v1h-1zM408,117h1v1h-1zM409,118h1v3h-1zM408,121h1v1h-1zM416,117h1v1h-1zM417,118h1v3h-1zM416,121h1v1h-1zM424,117h1v1h-1zM425,118h1v3h-1zM424,121h1v1h-1zM432,117h1v1h-1zM433,118h1v3h-1zM432,121h1v1h-1zM440,117h1v1h-1zM441,118h1v3h-1zM440,121h1v1h-1zM448,117h1v1h-1zM449,118h1v3h-1zM448,121h1v1h-1zM456,117h1v1h-1zM457,118h1v3h-1zM456,121h1v1h-1zM464,117h1v1h-1zM465,118h1v3h-1zM464,121h1v1h-1zM472,117h1v1h-1zM473,118h1v3h-1zM472,121h1v1h-1zM480,117h1v1h-1zM481,118h1v3h-1zM480,121h1v1h-1zM488,117h1v1h-1zM489,118h1v3h-1zM488,121h1v1h-1zM496,117h1v1h-1zM497,118h1v3h-1zM496,121h1v1h-1zM504,117h1v1h-1zM505,118h1v3h-1zM504,121h1v1h-1zM512,117h1v1h-1zM513,118h1v3h-1zM512,121h1v1h-1zM520,117h1v1h-1zM521,118h1v3h-1zM520,121h1v1h-1zM528,117h1v1h-1zM529,118h1v3h-1zM528,121h1v1h-1zM536,117h1v1h-1zM537,118h1v3h-1zM536,121h1v1h-1zM544,117h1v1h-1zM545,118h1v3h-1zM544,121h1v1h-1zM552,117h1v1h-1zM553,118h1v3h-1zM552,121h1v1h-1zM560,117h1v1h-1zM561,118h1v3h-1zM560,121h1v1h-1zM568,117h1v1h-1zM569,118h1v3h-1zM568,121h1v1h-1zM576,117h1v1h-1zM577,118h1v3h-1zM576,121h1v1h-1zM584,117h1v1h-1zM585,118h1v3h-1zM584,121h1v1h-1zM592,117h1v1h-1zM593,118h1v3h-1zM592,121h1v1h-1zM600,117h1v1h-1zM601,118h1v3h-1zM600,121h1v1h-1zM608,117h1v1h-1zM609,118h1v3h-1zM608,121h1v1h-1zM616,117h1v1h-1zM617,118h1v3h-1zM616,121h1v1h-1zM624,117h1v1h-1zM625,118h1v3h-1zM624,121h1v1h-1zM632,117h1v1h-1zM633,118h1v3h-1zM632,121h1v1h-1zM640,117h1v1h-1zM641,118h1v3h-1zM640,121h1v1h-1zM648,117h1v1h-1zM649,118h1v3h-1zM648,121h1v1h-1zM656,117h1v1h-1zM657,118h1v3h-1zM656,121h1v1h-1zM664,117h1v1h-1zM665,118h1v3h-1zM664,121h1v1h-1zM672,117h1v1h-1zM673,118h1v3h-1zM672,121h1v1h-1zM680,117h1v1h-1zM681,118h1v3h-1zM680,121h1v1h-1zM688,117h1v1h-1zM689,118h1v3h-1zM688,121h1v1h-1zM696,117h1v1h-1zM697,118h1v3h-1zM696,121h1v1h-1zM704,117h1v1h-1zM705,118h1v3h-1zM704,121h1v1h-1zM712,117h1v1h-1zM713,118h1v3h-1zM712,121h1v1h-1zM720,117h1v1h-1zM721,118h1v3h-1zM720,121h1v1h-1zM728,117h1v1h-1zM729,118h1v3h-1zM728,121h1v1h-1zM736,117h1v1h-1zM737,118h1v3h-1zM736,121h1v1h-1zM744,117h1v1h-1zM745,118h1v3h-1zM744,121h1v1h-1zM752,117h1v1h-1zM753,118h1v3h-1zM752,121h1v1h-1zM760,117h1v1h-1zM761,118h1v3h-1zM760,121h1v1h-1zM768,117h1v1h-1zM769,118h1v3h-1zM768,121h1v1h-1zM776,117h1v1h-1zM777,118h1v3h-1zM776,121h1v1h-1zM784,117h1v1h-1zM785,118h1v3h-1zM784,121h1v1h-1zM792,117h1v1h-1zM793,118h1v3h-1zM792,121h1v1h-1zM800,117h1v1h-1zM801,118h1v3h-1zM800,121h1v1h-1zM808,117h1v1h-1zM809,118h1v3h-1zM808,121h1v1h-1zM816,117h1v1h-1zM817,118h1v3h-1zM816,121h1v1h-1zM824,117h1v1h-1zM825,118h1v3h-1zM824,121h1v1h-1zM832,117h1v1h-1zM833,118h1v3h-1zM832,121h1v1h-1zM840,117h1v1h-1zM841,118h1v3h-1zM840,121h1v1h-1zM848,117h1v1h-1zM849,118h1v3h-1zM848,121h1v1h-1zM856,117h1v1h-1zM857,118h1v3h-1zM856,121h1v1h-1zM864,117h1v1h-1zM865,118h1v3h-1zM864,121h1v1h-1zM872,117h1v1h-1zM873,118h1v3h-1zM872,121h1v1h-1zM880,117h1v1h-1zM881,118h1v3h-1zM880,121h1v1h-1zM888,117h1v1h-1zM889,118h1v3h-1zM888,121h1v1h-1zM896,117h1v1h-1zM897,118h1v3h-1zM896,121h1v1h-1zM904,117h1v1h-1zM905,118h1v3h-1zM904,121h1v1h-1zM912,117h1v1h-1zM913,118h1v3h-1zM912,121h1v1h-1zM920,117h1v1h-1zM921,118h1v3h-1zM920,121h1v1h-1zM928,117h1v1h-1zM929,118h1v3h-1zM928,121h1v1h-1zM936,117h1v1h-1zM937,118h1v3h-1zM936,121h1v1h-1zM944,117h1v1h-1zM945,118h1v3h-1zM944,121h1v1h-1z" fill="#0c6ab2"/>
<path d="M159,116h1v1h-1zM159,122h1v1h-1zM167,116h1v1h-1zM167,122h1v1h-1zM175,116h1v1h-1zM175,122h1v1h-1zM183,116h1v1h-1zM183,122h1v1h-1zM191,116h1v1h-1zM191,122h1v1h-1zM199,116h1v1h-1zM199,122h1v1h-1zM207,116h1v1h-1zM207,122h1v1h-1zM215,116h1v1h-1zM215,122h1v1h-1zM223,116h1v1h-1zM223,122h1v1h-1zM231,116h1v1h-1zM231,122h1v1h-1zM239,116h1v1h-1zM239,122h1v1h-1zM247,116h1v1h-1zM247,122h1v1h-1zM255,116h1v1h-1zM255,122h1v1h-1zM263,116h1v1h-1zM263,122h1v1h-1zM271,116h1v1h-1zM271,122h1v1h-1zM279,116h1v1h-1zM279,122h1v1h-1zM287,116h1v1h-1zM287,122h1v1h-1zM295,116h1v1h-1zM295,122h1v1h-1zM303,116h1v1h-1zM303,122h1v1h-1zM311,116h1v1h-1zM311,122h1v1h-1zM319,116h1v1h-1zM319,122h1v1h-1zM327,116h1v1h-1zM327,122h1v1h-1zM335,116h1v1h-1zM335,122h1v1h-1zM343,116h1v1h-1zM343,122h1v1h-1zM351,116h1v1h-1zM351,122h1v1h-1zM359,116h1v1h-1zM359,122h1v1h-1zM367,116h1v1h-1zM367,122h1v1h-1zM375,116h1v1h-1zM375,122h1v1h-1zM383,116h1v1h-1zM383,122h1v1h-1zM391,116h1v1h-1zM391,122h1v1h-1zM399,116h1v1h-1zM399,122h1v1h-1zM407,116h1v1h-1zM407,122h1v1h-1zM415,116h1v1h-1zM415,122h1v1h-1zM423,116h1v1h-1zM423,122h1v1h-1zM431,116h1v1h-1zM431,122h1v1h-1zM439,116h1v1h-1zM439,122h1v1h-1zM447,116h1v1h-1zM447,122h1v1h-1zM455,116h1v1h-1zM455,122h1v1h-1zM463,116h1v1h-1zM463,122h1v1h-1zM471,116h1v1h-1zM471,122h1v1h-1zM479,116h1v1h-1zM479,122h1v1h-1zM487,116h1v1h-1zM487,122h1v1h-1zM495,116h1v1h-1zM495,122h1v1h-1zM503,116h1v1h-1zM503,122h1v1h-1zM511,116h1v1h-1zM511,122h1v1h-1zM519,116h1v1h-1zM519,122h1v1h-1zM527,116h1v1h-1zM527,122h1v1h-1zM535,116h1v1h-1zM535,122h1v1h-1zM543,116h1v1h-1zM543,122h1v1h-1zM551,116h1v1h-1zM551,122h1v1h-1zM559,116h1v1h-1zM559,122h1v1h-1zM567,116h1v1h-1zM567,122h1v1h-1zM575,116h1v1h-1zM575,122h1v1h-1zM583,116h1v1h-1zM583,122h1v1h-1zM591,116h1v1h-1zM591,122h1v1h-1zM599,116h1v1h-1zM599,122h1v1h-1zM607,116h1v1h-1zM607,122h1v1h-1zM615,116h1v1h-1zM615,122h1v1h-1zM623,116h1v1h-1zM623,122h1v1h-1zM631,116h1v1h-1zM631,122h1v1h-1zM639,116h1v1h-1zM639,122h1v1h-1zM647,116h1v1h-1zM647,122h1v1h-1zM655,116h1v1h-1zM655,122h1v1h-1zM663,116h1v1h-1zM663,122h1v1h-1zM671,116h1v1h-1zM671,122h1v1h-1zM679,116h1v1h-1zM679,122h1v1h-1zM687,116h1v1h-1zM687,122h1v1h-1zM695,116h1v1h-1zM695,122h1v1h-1zM703,116h1v1h-1zM703,122h1v1h-1zM711,116h1v1h-1zM711,122h1v1h-1zM719,116h1v1h-1zM719,122h1v1h-1zM727,116h1v1h-1zM727,122h1v1h-1zM735,116h1v1h-1zM735,122h1v1h-1zM743,116h1v1h-1zM743,122h1v1h-1zM751,116h1v1h-1zM751,122h1v1h-1zM759,116h1v1h-1zM759,122h1v1h-1zM767,116h1v1h-1zM767,122h1v1h-1zM775,116h1v1h-1zM775,122h1v1h-1zM783,116h1v1h-1zM783,122h1v1h-1zM791,116h1v1h-1zM791,122h1v1h-1zM799,116h1v1h-1zM799,122h1v1h-1zM807,116h1v1h-1zM807,122h1v1h-1zM815,116h1v1h-1zM815,122h1v1h-1zM823,116h1v1h-1zM823,122h1v1h-1zM831,116h1v1h-1zM831,122h1v1h-1zM839,116h1v1h-1zM839,122h1v1h-1zM847,116h1v1h-1zM847,122h1v1h-1zM855,116h1v1h-1zM855,122h1v1h-1zM863,116h1v1h-1zM863,122h1v1h-1zM871,116h1v1h-1zM871,122h1v1h-1zM879,116h1v1h-1zM879,122h1v1h-1zM887,116h1v1h-1zM887,122h1v1h-1zM895,116h1v1h-1zM895,122h1v1h-1zM903,116h1v1h-1zM903,122h1v1h-1zM911,116h1v1h-1zM911,122h1v1h-1zM919,116h1v1h-1zM919,122h1v1h-1zM927,116h1v1h-1zM927,122h1v1h-1zM935,116h1v1h-1zM935,122h1v1h-1zM943,116h1v1h-1zM943,122h1v1h-1z" fill="#0c6ab2" fill-opacity="0.45"/>
<path d="M515,0L515,1237L197,1010L197,1180L530,1409L696,1409L696,0Z" fill="#0c0c78" stroke="#0c0c78" stroke-width="15.75" transform="matrix(0.006348,0,0,-0.006792,145,140)"/>
<text x="99 107 118 127 138" y="140" font-size="13" fill="#0c0c78" stroke="#0c0c78" stroke-width="0.1" transform="matrix(1,0,0,1.07,0,-9.800)" >TMEM5</text>
<rect x="157" y="135" width="792" height="1" fill="#0c0c78" />
<path d="M160,133h1v1h-1zM161,134h1v3h-1zM160,137h1v1h-1zM168,133h1v1h-1zM169,134h1v3h-1zM168,137h1v1h-1zM176,133h1v1h-1zM177,134h1v3h-1zM176,137h1v1h-1zM184,133h1v1h-1zM185,134h1v3h-1zM184,137h1v1h-1zM192,133h1v1h-1zM193,134h1v3h-1zM192,137h1v1h-1zM200,133h1v1h-1zM201,134h1v3h-1zM200,137h1v1h-1zM208,133h1v1h-1zM209,134h1v3h-1zM208,137h1v1h-1zM216,133h1v1h-1zM217,134h1v3h-1zM216,137h1v1h-1zM224,133h1v1h-1zM225,134h1v3h-1zM224,137h1v1h-1zM232,133h1v1h-1zM233,134h1v3h-1zM232,137h1v1h-1zM240,133h1v1h-1zM241,134h1v3h-1zM240,137h1v1h-1zM248,133h1v1h-1zM249,134h1v3h-1zM248,137h1v1h-1zM256,133h1v1h-1zM257,134h1v3h-1zM256,137h1v1h-1zM264,133h1v1h-1zM265,134h1v3h-1zM264,137h1v1h-1zM272,133h1v1h-1zM273,134h1v3h-1zM272,137h1v1h-1zM280,133h1v1h-1zM281,134h1v3h-1zM280,137h1v1h-1zM288,133h1v1h-1zM289,134h1v3h-1zM288,137h1v1h-1zM296,133h1v1h-1zM297,134h1v3h-1zM296,137h1v1h-1zM304,133h1v1h-1zM305,134h1v3h-1zM304,137h1v1h-1zM312,133h1v1h-1zM313,134h1v3h-1zM312,137h1v1h-1zM320,133h1v1h-1zM321,134h1v3h-1zM320,137h1v1h-1zM328,133h1v1h-1zM329,134h1v3h-1zM328,137h1v1h-1zM336,133h1v1h-1zM337,134h1v3h-1zM336,137h1v1h-1zM344,133h1v1h-1zM345,134h1v3h-1zM344,137h1v1h-1zM352,133h1v1h-1zM353,134h1v3h-1zM352,137h1v1h-1zM360,133h1v1h-1zM361,134h1v3h-1zM360,137h1v1h-1zM368,133h1v1h-1zM369,134h1v3h-1zM368,137h1v1h-1zM376,133h1v1h-1zM377,134h1v3h-1zM376,137h1v1h-1zM384,133h1v1h-1zM385,134h1v3h-1zM384,137h1v1h-1zM392,133h1v1h-1zM393,134h1v3h-1zM392,137h1v1h-1zM400,133h1v1h-1zM401,134h1v3h-1zM400,137h1v1h-1zM408,133h1v1h-1zM409,134h1v3h-1zM408,137h1v1h-1zM416,133h1v1h-1zM417,134h1v3h-1zM416,137h1v1h-1zM424,133h1v1h-1zM425,134h1v3h-1zM424,137h1v1h-1zM432,133h1v1h-1zM433,134h1v3h-1zM432,137h1v1h-1zM440,133h1v1h-1zM441,134h1v3h-1zM440,137h1v1h-1zM448,133h1v1h-1zM449,134h1v3h-1zM448,137h1v1h-1zM456,133h1v1h-1zM457,134h1v3h-1zM456,137h1v1h-1zM464,133h1v1h-1zM465,134h1v3h-1zM464,137h1v1h-1zM472,133h1v1h-1zM473,134h1v3h-1zM472,137h1v1h-1zM480,133h1v1h-1zM481,134h1v3h-1zM480,137h1v1h-1zM488,133h1v1h-1zM489,134h1v3h-1zM488,137h1v1h-1zM496,133h1v1h-1zM497,134h1v3h-1zM496,137h1v1h-1zM504,133h1v1h-1zM505,134h1v3h-1zM504,137h1v1h-1zM512,133h1v1h-1zM513,134h1v3h-1zM512,137h1v1h-1zM520,133h1v1h-1zM521,134h1v3h-1zM520,137h1v1h-1zM528,133h1v1h-1zM529,134h1v3h-1zM528,137h1v1h-1zM536,133h1v1h-1zM537,134h1v3h-1zM536,137h1v1h-1zM544,133h1v1h-1zM545,134h1v3h-1zM544,137h1v1h-1zM552,133h1v1h-1zM553,134h1v3h-1zM552,137h1v1h-1zM560,133h1v1h-1zM561,134h1v3h-1zM560,137h1v1h-1zM568,133h1v1h-1zM569,134h1v3h-1zM568,137h1v1h-1zM576,133h1v1h-1zM577,134h1v3h-1zM576,137h1v1h-1zM584,133h1v1h-1zM585,134h1v3h-1zM584,137h1v1h-1zM592,133h1v1h-1zM593,134h1v3h-1zM592,137h1v1h-1zM600,133h1v1h-1zM601,134h1v3h-1zM600,137h1v1h-1zM608,133h1v1h-1zM609,134h1v3h-1zM608,137h1v1h-1zM616,133h1v1h-1zM617,134h1v3h-1zM616,137h1v1h-1zM624,133h1v1h-1zM625,134h1v3h-1zM624,137h1v1h-1zM632,133h1v1h-1zM633,134h1v3h-1zM632,137h1v1h-1zM640,133h1v1h-1zM641,134h1v3h-1zM640,137h1v1h-1zM648,133h1v1h-1zM649,134h1v3h-1zM648,137h1v1h-1zM656,133h1v1h-1zM657,134h1v3h-1zM656,137h1v1h-1zM664,133h1v1h-1zM665,134h1v3h-1zM664,137h1v1h-1zM672,133h1v1h-1zM673,134h1v3h-1zM672,137h1v1h-1zM680,133h1v1h-1zM681,134h1v3h-1zM680,137h1v1h-1zM688,133h1v1h-1zM689,134h1v3h-1zM688,137h1v1h-1zM696,133h1v1h-1zM697,134h1v3h-1zM696,137h1v1h-1zM704,133h1v1h-1zM705,134h1v3h-1zM704,137h1v1h-1zM712,133h1v1h-1zM713,134h1v3h-1zM712,137h1v1h-1zM720,133h1v1h-1zM721,134h1v3h-1zM720,137h1v1h-1zM728,133h1v1h-1zM729,134h1v3h-1zM728,137h1v1h-1zM736,133h1v1h-1zM737,134h1v3h-1zM736,137h1v1h-1zM744,133h1v1h-1zM745,134h1v3h-1zM744,137h1v1h-1zM752,133h1v1h-1zM753,134h1v3h-1zM752,137h1v1h-1zM760,133h1v1h-1zM761,134h1v3h-1zM760,137h1v1h-1zM768,133h1v1h-1zM769,134h1v3h-1zM768,137h1v1h-1zM776,133h1v1h-1zM777,134h1v3h-1zM776,137h1v1h-1zM784,133h1v1h-1zM785,134h1v3h-1zM784,137h1v1h-1zM792,133h1v1h-1zM793,134h1v3h-1zM792,137h1v1h-1zM800,133h1v1h-1zM801,134h1v3h-1zM800,137h1v1h-1zM808,133h1v1h-1zM809,134h1v3h-1zM808,137h1v1h-1zM816,133h1v1h-1zM817,134h1v3h-1zM816,137h1v1h-1zM824,133h1v1h-1zM825,134h1v3h-1zM824,137h1v1h-1zM832,133h1v1h-1zM833,134h1v3h-1zM832,137h1v1h-1zM840,133h1v1h-1zM841,134h1v3h-1zM840,137h1v1h-1zM848,133h1v1h-1zM849,134h1v3h-1zM848,137h1v1h-1zM856,133h1v1h-1zM857,134h1v3h-1zM856,137h1v1h-1zM864,133h1v1h-1zM865,134h1v3h-1zM864,137h1v1h-1zM872,133h1v1h-1zM873,134h1v3h-1zM872,137h1v1h-1zM880,133h1v1h-1zM881,134h1v3h-1zM880,137h1v1h-1zM888,133h1v1h-1zM889,134h1v3h-1zM888,137h1v1h-1zM896,133h1v1h-1zM897,134h1v3h-1zM896,137h1v1h-1zM904,133h1v1h-1zM905,134h1v3h-1zM904,137h1v1h-1zM912,133h1v1h-1zM913,134h1v3h-1zM912,137h1v1h-1zM920,133h1v1h-1zM921,134h1v3h-1zM920,137h1v1h-1zM928,133h1v1h-1zM929,134h1v3h-1zM928,137h1v1h-1zM936,133h1v1h-1zM937,134h1v3h-1zM936,137h1v1h-1zM944,133h1v1h-1zM945,134h1v3h-1zM944,137h1v1h-1z" fill="#0c0c78"/>
<path d="M159,132h1v1h-1zM159,138h1v1h-1zM167,132h1v1h-1zM167,138h1v1h-1zM175,132h1v1h-1zM175,138h1v1h-1zM183,132h1v1h-1zM183,138h1v1h-1zM191,132h1v1h-1zM191,138h1v1h-1zM199,132h1v1h-1zM199,138h1v1h-1zM207,132h1v1h-1zM207,138h1v1h-1zM215,132h1v1h-1zM215,138h1v1h-1zM223,132h1v1h-1zM223,138h1v1h-1zM231,132h1v1h-1zM231,138h1v1h-1zM239,132h1v1h-1zM239,138h1v1h-1zM247,132h1v1h-1zM247,138h1v1h-1zM255,132h1v1h-1zM255,138h1v1h-1zM263,132h1v1h-1zM263,138h1v1h-1zM271,132h1v1h-1zM271,138h1v1h-1zM279,132h1v1h-1zM279,138h1v1h-1zM287,132h1v1h-1zM287,138h1v1h-1zM295,132h1v1h-1zM295,138h1v1h-1zM303,132h1v1h-1zM303,138h1v1h-1zM311,132h1v1h-1zM311,138h1v1h-1zM319,132h1v1h-1zM319,138h1v1h-1zM327,132h1v1h-1zM327,138h1v1h-1zM335,132h1v1h-1zM335,138h1v1h-1zM343,132h1v1h-1zM343,138h1v1h-1zM351,132h1v1h-1zM351,138h1v1h-1zM359,132h1v1h-1zM359,138h1v1h-1zM367,132h1v1h-1zM367,138h1v1h-1zM375,132h1v1h-1zM375,138h1v1h-1zM383,132h1v1h-1zM383,138h1v1h-1zM391,132h1v1h-1zM391,138h1v1h-1zM399,132h1v1h-1zM399,138h1v1h-1zM407,132h1v1h-1zM407,138h1v1h-1zM415,132h1v1h-1zM415,138h1v1h-1zM423,132h1v1h-1zM423,138h1v1h-1zM431,132h1v1h-1zM431,138h1v1h-1zM439,132h1v1h-1zM439,138h1v1h-1zM447,132h1v1h-1zM447,138h1v1h-1zM455,132h1v1h-1zM455,138h1v1h-1zM463,132h1v1h-1zM463,138h1v1h-1zM471,132h1v1h-1zM471,138h1v1h-1zM479,132h1v1h-1zM479,138h1v1h-1zM487,132h1v1h-1zM487,138h1v1h-1zM495,132h1v1h-1zM495,138h1v1h-1zM503,132h1v1h-1zM503,138h1v1h-1zM511,132h1v1h-1zM511,138h1v1h-1zM519,132h1v1h-1zM519,138h1v1h-1zM527,132h1v1h-1zM527,138h1v1h-1zM535,132h1v1h-1zM535,138h1v1h-1zM543,132h1v1h-1zM543,138h1v1h-1zM551,132h1v1h-1zM551,138h1v1h-1zM559,132h1v1h-1zM559,138h1v1h-1zM567,132h1v1h-1zM567,138h1v1h-1zM575,132h1v1h-1zM575,138h1v1h-1zM583,132h1v1h-1zM583,138h1v1h-1zM591,132h1v1h-1zM591,138h1v1h-1zM599,132h1v1h-1zM599,138h1v1h-1zM607,132h1v1h-1zM607,138h1v1h-1zM615,132h1v1h-1zM615,138h1v1h-1zM623,132h1v1h-1zM623,138h1v1h-1zM631,132h1v1h-1zM631,138h1v1h-1zM639,132h1v1h-1zM639,138h1v1h-1zM647,132h1v1h-1zM647,138h1v1h-1zM655,132h1v1h-1zM655,138h1v1h-1zM663,132h1v1h-1zM663,138h1v1h-1zM671,132h1v1h-1zM671,138h1v1h-1zM679,132h1v1h-1zM679,138h1v1h-1zM687,132h1v1h-1zM687,138h1v1h-1zM695,132h1v1h-1zM695,138h1v1h-1zM703,132h1v1h-1zM703,138h1v1h-1zM711,132h1v1h-1zM711,138h1v1h-1zM719,132h1v1h-1zM719,138h1v1h-1zM727,132h1v1h-1zM727,138h1v1h-1zM735,132h1v1h-1zM735,138h1v1h-1zM743,132h1v1h-1zM743,138h1v1h-1zM751,132h1v1h-1zM751,138h1v1h-1zM759,132h1v1h-1zM759,138h1v1h-1zM767,132h1v1h-1zM767,138h1v1h-1zM775,132h1v1h-1zM775,138h1v1h-1zM783,132h1v1h-1zM783,138h1v1h-1zM791,132h1v1h-1zM791,138h1v1h-1zM799,132h1v1h-1zM799,138h1v1h-1zM807,132h1v1h-1zM807,138h1v1h-1zM815,132h1v1h-1zM815,138h1v1h-1zM823,132h1v1h-1zM823,138h1v1h-1zM831,132h1v1h-1zM831,138h1v1h-1zM839,132h1v1h-1zM839,138h1v1h-1zM847,132h1v1h-1zM847,138h1v1h-1zM855,132h1v1h-1zM855,138h1v1h-1zM863,132h1v1h-1zM863,138h1v1h-1zM871,132h1v1h-1zM871,138h1v1h-1zM879,132h1v1h-1zM879,138h1v1h-1zM887,132h1v1h-1zM887,138h1v1h-1zM895,132h1v1h-1zM895,138h1v1h-1zM903,132h1v1h-1zM903,138h1v1h-1zM911,132h1v1h-1zM911,138h1v1h-1zM919,132h1v1h-1zM919,138h1v1h-1zM927,132h1v1h-1zM927,138h1v1h-1zM935,132h1v1h-1zM935,138h1v1h-1zM943,132h1v1h-1zM943,138h1v1h-1z" fill="#0c0c78" fill-opacity="0.45"/>
<path d="M515,0L515,1237L197,1010L197,1180L530,1409L696,1409L696,0Z" fill="#0c0c78" stroke="#0c0c78" stroke-width="15.75" transform="matrix(0.006348,0,0,-0.006792,145,156)"/>
<text x="99 107 118 127 138" y="156" font-size="13" fill="#0c0c78" stroke="#0c0c78" stroke-width="0.1" transform="matrix(1,0,0,1.07,0,-10.920)" >TMEM5</text>
<rect x="157" y="151" width="792" height="1" fill="#0c0c78" />
<path d="M160,149h1v1h-1zM161,150h1v3h-1zM160,153h1v1h-1zM168,149h1v1h-1zM169,150h1v3h-1zM168,153h1v1h-1zM176,149h1v1h-1zM177,150h1v3h-1zM176,153h1v1h-1zM184,149h1v1h-1zM185,150h1v3h-1zM184,153h1v1h-1zM192,149h1v1h-1zM193,150h1v3h-1zM192,153h1v1h-1zM200,149h1v1h-1zM201,150h1v3h-1zM200,153h1v1h-1zM208,149h1v1h-1zM209,150h1v3h-1zM208,153h1v1h-1zM216,149h1v1h-1zM217,150h1v3h-1zM216,153h1v1h-1zM224,149h1v1h-1zM225,150h1v3h-1zM224,153h1v1h-1zM232,149h1v1h-1zM233,150h1v3h-1zM232,153h1v1h-1zM240,149h1v1h-1zM241,150h1v3h-1zM240,153h1v1h-1zM248,149h1v1h-1zM249,150h1v3h-1zM248,153h1v1h-1zM256,149h1v1h-1zM257,150h1v3h-1zM256,153h1v1h-1zM264,149h1v1h-1zM265,150h1v3h-1zM264,153h1v1h-1zM272,149h1v1h-1zM273,150h1v3h-1zM272,153h1v1h-1zM280,149h1v1h-1zM281,150h1v3h-1zM280,153h1v1h-1zM288,149h1v1h-1zM289,150h1v3h-1zM288,153h1v1h-1zM296,149h1v1h-1zM297,150h1v3h-1zM296,153h1v1h-1zM304,149h1v1h-1zM305,150h1v3h-1zM304,153h1v1h-1zM312,149h1v1h-1zM313,150h1v3h-1zM312,153h1v1h-1zM320,149h1v1h-1zM321,150h1v3h-1zM320,153h1v1h-1zM328,149h1v1h-1zM329,150h1v3h-1zM328,153h1v1h-1zM336,149h1v1h-1zM337,150h1v3h-1zM336,153h1v1h-1zM344,149h1v1h-1zM345,150h1v3h-1zM344,153h1v1h-1zM352,149h1v1h-1zM353,150h1v3h-1zM352,153h1v1h-1zM360,149h1v1h-1zM361,150h1v3h-1zM360,153h1v1h-1zM368,149h1v1h-1zM369,150h1v3h-1zM368,153h1v1h-1zM376,149h1v1h-1zM377,150h1v3h-1zM376,153h1v1h-1zM384,149h1v1h-1zM385,150h1v3h-1zM384,153h1v1h-1zM392,149h1v1h-1zM393,150h1v3h-1zM392,153h1v1h-1zM400,149h1v1h-1zM401,150h1v3h-1zM400,153h1v1h-1zM408,149h1v1h-1zM409,150h1v3h-1zM408,153h1v1h-1zM416,149h1v1h-1zM417,150h1v3h-1zM416,153h1v1h-1zM424,149h1v1h-1zM425,150h1v3h-1zM424,153h1v1h-1zM432,149h1v1h-1zM433,150h1v3h-1zM432,153h1v1h-1zM440,149h1v1h-1zM441,150h1v3h-1zM440,153h1v1h-1zM448,149h1v1h-1zM449,150h1v3h-1zM448,153h1v1h-1zM456,149h1v1h-1zM457,150h1v3h-1zM456,153h1v1h-1zM464,149h1v1h-1zM465,150h1v3h-1zM464,153h1v1h-1zM472,149h1v1h-1zM473,150h1v3h-1zM472,153h1v1h-1zM480,149h1v1h-1zM481,150h1v3h-1zM480,153h1v1h-1zM488,149h1v1h-1zM489,150h1v3h-1zM488,153h1v1h-1zM496,149h1v1h-1zM497,150h1v3h-1zM496,153h1v1h-1zM504,149h1v1h-1zM505,150h1v3h-1zM504,153h1v1h-1zM512,149h1v1h-1zM513,150h1v3h-1zM512,153h1v1h-1zM520,149h1v1h-1zM521,150h1v3h-1zM520,153h1v1h-1zM528,149h1v1h-1zM529,150h1v3h-1zM528,153h1v1h-1zM536,149h1v1h-1zM537,150h1v3h-1zM536,153h1v1h-1zM544,149h1v1h-1zM545,150h1v3h-1zM544,153h1v1h-1zM552,149h1v1h-1zM553,150h1v3h-1zM552,153h1v1h-1zM560,149h1v1h-1zM561,150h1v3h-1zM560,153h1v1h-1zM568,149h1v1h-1zM569,150h1v3h-1zM568,153h1v1h-1zM576,149h1v1h-1zM577,150h1v3h-1zM576,153h1v1h-1zM584,149h1v1h-1zM585,150h1v3h-1zM584,153h1v1h-1zM592,149h1v1h-1zM593,150h1v3h-1zM592,153h1v1h-1zM600,149h1v1h-1zM601,150h1v3h-1zM600,153h1v1h-1zM608,149h1v1h-1zM609,150h1v3h-1zM608,153h1v1h-1zM616,149h1v1h-1zM617,150h1v3h-1zM616,153h1v1h-1zM624,149h1v1h-1zM625,150h1v3h-1zM624,153h1v1h-1zM632,149h1v1h-1zM633,150h1v3h-1zM632,153h1v1h-1zM640,149h1v1h-1zM641,150h1v3h-1zM640,153h1v1h-1zM648,149h1v1h-1zM649,150h1v3h-1zM648,153h1v1h-1zM656,149h1v1h-1zM657,150h1v3h-1zM656,153h1v1h-1zM664,149h1v1h-1zM665,150h1v3h-1zM664,153h1v1h-1zM672,149h1v1h-1zM673,150h1v3h-1zM672,153h1v1h-1zM680,149h1v1h-1zM681,150h1v3h-1zM680,153h1v1h-1zM688,149h1v1h-1zM689,150h1v3h-1zM688,153h1v1h-1zM696,149h1v1h-1zM697,150h1v3h-1zM696,153h1v1h-1zM704,149h1v1h-1zM705,150h1v3h-1zM704,153h1v1h-1zM712,149h1v1h-1zM713,150h1v3h-1zM712,153h1v1h-1zM720,149h1v1h-1zM721,150h1v3h-1zM720,153h1v1h-1zM728,149h1v1h-1zM729,150h1v3h-1zM728,153h1v1h-1zM736,149h1v1h-1zM737,150h1v3h-1zM736,153h1v1h-1zM744,149h1v1h-1zM745,150h1v3h-1zM744,153h1v1h-1zM752,149h1v1h-1zM753,150h1v3h-1zM752,153h1v1h-1zM760,149h1v1h-1zM761,150h1v3h-1zM760,153h1v1h-1zM768,149h1v1h-1zM769,150h1v3h-1zM768,153h1v1h-1zM776,149h1v1h-1zM777,150h1v3h-1zM776,153h1v1h-1zM784,149h1v1h-1zM785,150h1v3h-1zM784,153h1v1h-1zM792,149h1v1h-1zM793,150h1v3h-1zM792,153h1v1h-1zM800,149h1v1h-1zM801,150h1v3h-1zM800,153h1v1h-1zM808,149h1v1h-1zM809,150h1v3h-1zM808,153h1v1h-1zM816,149h1v1h-1zM817,150h1v3h-1zM816,153h1v1h-1zM824,149h1v1h-1zM825,150h1v3h-1zM824,153h1v1h-1zM832,149h1v1h-1zM833,150h1v3h-1zM832,153h1v1h-1zM840,149h1v1h-1zM841,150h1v3h-1zM840,153h1v1h-1zM848,149h1v1h-1zM849,150h1v3h-1zM848,153h1v1h-1zM856,149h1v1h-1zM857,150h1v3h-1zM856,153h1v1h-1zM864,149h1v1h-1zM865,150h1v3h-1zM864,153h1v1h-1zM872,149h1v1h-1zM873,150h1v3h-1zM872,153h1v1h-1zM880,149h1v1h-1zM881,150h1v3h-1zM880,153h1v1h-1zM888,149h1v1h-1zM889,150h1v3h-1zM888,153h1v1h-1zM896,149h1v1h-1zM897,150h1v3h-1zM896,153h1v1h-1zM904,149h1v1h-1zM905,150h1v3h-1zM904,153h1v1h-1zM912,149h1v1h-1zM913,150h1v3h-1zM912,153h1v1h-1zM920,149h1v1h-1zM921,150h1v3h-1zM920,153h1v1h-1zM928,149h1v1h-1zM929,150h1v3h-1zM928,153h1v1h-1zM936,149h1v1h-1zM937,150h1v3h-1zM936,153h1v1h-1zM944,149h1v1h-1zM945,150h1v3h-1zM944,153h1v1h-1z" fill="#0c0c78"/>
<path d="M159,148h1v1h-1zM159,154h1v1h-1zM167,148h1v1h-1zM167,154h1v1h-1zM175,148h1v1h-1zM175,154h1v1h-1zM183,148h1v1h-1zM183,154h1v1h-1zM191,148h1v1h-1zM191,154h1v1h-1zM199,148h1v1h-1zM199,154h1v1h-1zM207,148h1v1h-1zM207,154h1v1h-1zM215,148h1v1h-1zM215,154h1v1h-1zM223,148h1v1h-1zM223,154h1v1h-1zM231,148h1v1h-1zM231,154h1v1h-1zM239,148h1v1h-1zM239,154h1v1h-1zM247,148h1v1h-1zM247,154h1v1h-1zM255,148h1v1h-1zM255,154h1v1h-1zM263,148h1v1h-1zM263,154h1v1h-1zM271,148h1v1h-1zM271,154h1v1h-1zM279,148h1v1h-1zM279,154h1v1h-1zM287,148h1v1h-1zM287,154h1v1h-1zM295,148h1v1h-1zM295,154h1v1h-1zM303,148h1v1h-1zM303,154h1v1h-1zM311,148h1v1h-1zM311,154h1v1h-1zM319,148h1v1h-1zM319,154h1v1h-1zM327,148h1v1h-1zM327,154h1v1h-1zM335,148h1v1h-1zM335,154h1v1h-1zM343,148h1v1h-1zM343,154h1v1h-1zM351,148h1v1h-1zM351,154h1v1h-1zM359,148h1v1h-1zM359,154h1v1h-1zM367,148h1v1h-1zM367,154h1v1h-1zM375,148h1v1h-1zM375,154h1v1h-1zM383,148h1v1h-1zM383,154h1v1h-1zM391,148h1v1h-1zM391,154h1v1h-1zM399,148h1v1h-1zM399,154h1v1h-1zM407,148h1v1h-1zM407,154h1v1h-1zM415,148h1v1h-1zM415,154h1v1h-1zM423,148h1v1h-1zM423,154h1v1h-1zM431,148h1v1h-1zM431,154h1v1h-1zM439,148h1v1h-1zM439,154h1v1h-1zM447,148h1v1h-1zM447,154h1v1h-1zM455,148h1v1h-1zM455,154h1v1h-1zM463,148h1v1h-1zM463,154h1v1h-1zM471,148h1v1h-1zM471,154h1v1h-1zM479,148h1v1h-1zM479,154h1v1h-1zM487,148h1v1h-1zM487,154h1v1h-1zM495,148h1v1h-1zM495,154h1v1h-1zM503,148h1v1h-1zM503,154h1v1h-1zM511,148h1v1h-1zM511,154h1v1h-1zM519,148h1v1h-1zM519,154h1v1h-1zM527,148h1v1h-1zM527,154h1v1h-1zM535,148h1v1h-1zM535,154h1v1h-1zM543,148h1v1h-1zM543,154h1v1h-1zM551,148h1v1h-1zM551,154h1v1h-1zM559,148h1v1h-1zM559,154h1v1h-1zM567,148h1v1h-1zM567,154h1v1h-1zM575,148h1v1h-1zM575,154h1v1h-1zM583,148h1v1h-1zM583,154h1v1h-1zM591,148h1v1h-1zM591,154h1v1h-1zM599,148h1v1h-1zM599,154h1v1h-1zM607,148h1v1h-1zM607,154h1v1h-1zM615,148h1v1h-1zM615,154h1v1h-1zM623,148h1v1h-1zM623,154h1v1h-1zM631,148h1v1h-1zM631,154h1v1h-1zM639,148h1v1h-1zM639,154h1v1h-1zM647,148h1v1h-1zM647,154h1v1h-1zM655,148h1v1h-1zM655,154h1v1h-1zM663,148h1v1h-1zM663,154h1v1h-1zM671,148h1v1h-1zM671,154h1v1h-1zM679,148h1v1h-1zM679,154h1v1h-1zM687,148h1v1h-1zM687,154h1v1h-1zM695,148h1v1h-1zM695,154h1v1h-1zM703,148h1v1h-1zM703,154h1v1h-1zM711,148h1v1h-1zM711,154h1v1h-1zM719,148h1v1h-1zM719,154h1v1h-1zM727,148h1v1h-1zM727,154h1v1h-1zM735,148h1v1h-1zM735,154h1v1h-1zM743,148h1v1h-1zM743,154h1v1h-1zM751,148h1v1h-1zM751,154h1v1h-1zM759,148h1v1h-1zM759,154h1v1h-1zM767,148h1v1h-1zM767,154h1v1h-1zM775,148h1v1h-1zM775,154h1v1h-1zM783,148h1v1h-1zM783,154h1v1h-1zM791,148h1v1h-1zM791,154h1v1h-1zM799,148h1v1h-1zM799,154h1v1h-1zM807,148h1v1h-1zM807,154h1v1h-1zM815,148h1v1h-1zM815,154h1v1h-1zM823,148h1v1h-1zM823,154h1v1h-1zM831,148h1v1h-1zM831,154h1v1h-1zM839,148h1v1h-1zM839,154h1v1h-1zM847,148h1v1h-1zM847,154h1v1h-1zM855,148h1v1h-1zM855,154h1v1h-1zM863,148h1v1h-1zM863,154h1v1h-1zM871,148h1v1h-1zM871,154h1v1h-1zM879,148h1v1h-1zM879,154h1v1h-1zM887,148h1v1h-1zM887,154h1v1h-1zM895,148h1v1h-1zM895,154h1v1h-1zM903,148h1v1h-1zM903,154h1v1h-1zM911,148h1v1h-1zM911,154h1v1h-1zM919,148h1v1h-1zM919,154h1v1h-1zM927,148h1v1h-1zM927,154h1v1h-1zM935,148h1v1h-1zM935,154h1v1h-1zM943,148h1v1h-1zM943,154h1v1h-1z" fill="#0c0c78" fill-opacity="0.45"/>
<path d="M515,0L515,1237L197,1010L197,1180L530,1409L696,1409L696,0Z" fill="#0c0c78" stroke="#0c0c78" stroke-width="15.75" transform="matrix(0.006348,0,0,-0.006792,145,172)"/>
<text x="99 107 118 127 138" y="172" font-size="13" fill="#0c0c78" stroke="#0c0c78" stroke-width="0.1" transform="matrix(1,0,0,1.07,0,-12.040)" >TMEM5</text>
<rect x="157" y="167" width="792" height="1" fill="#0c0c78" />
<path d="M160,165h1v1h-1zM161,166h1v3h-1zM160,169h1v1h-1zM168,165h1v1h-1zM169,166h1v3h-1zM168,169h1v1h-1zM176,165h1v1h-1zM177,166h1v3h-1zM176,169h1v1h-1zM184,165h1v1h-1zM185,166h1v3h-1zM184,169h1v1h-1zM192,165h1v1h-1zM193,166h1v3h-1zM192,169h1v1h-1zM200,165h1v1h-1zM201,166h1v3h-1zM200,169h1v1h-1zM208,165h1v1h-1zM209,166h1v3h-1zM208,169h1v1h-1zM216,165h1v1h-1zM217,166h1v3h-1zM216,169h1v1h-1zM224,165h1v1h-1zM225,166h1v3h-1zM224,169h1v1h-1zM232,165h1v1h-1zM233,166h1v3h-1zM232,169h1v1h-1zM240,165h1v1h-1zM241,166h1v3h-1zM240,169h1v1h-1zM248,165h1v1h-1zM249,166h1v3h-1zM248,169h1v1h-1zM256,165h1v1h-1zM257,166h1v3h-1zM256,169h1v1h-1zM264,165h1v1h-1zM265,166h1v3h-1zM264,169h1v1h-1zM272,165h1v1h-1zM273,166h1v3h-1zM272,169h1v1h-1zM280,165h1v1h-1zM281,166h1v3h-1zM280,169h1v1h-1zM288,165h1v1h-1zM289,166h1v3h-1zM288,169h1v1h-1zM296,165h1v1h-1zM297,166h1v3h-1zM296,169h1v1h-1zM304,165h1v1h-1zM305,166h1v3h-1zM304,169h1v1h-1zM312,165h1v1h-1zM313,166h1v3h-1zM312,169h1v1h-1zM320,165h1v1h-1zM321,166h1v3h-1zM320,169h1v1h-1zM328,165h1v1h-1zM329,166h1v3h-1zM328,169h1v1h-1zM336,165h1v1h-1zM337,166h1v3h-1zM336,169h1v1h-1zM344,165h1v1h-1zM345,166h1v3h-1zM344,169h1v1h-1zM352,165h1v1h-1zM353,166h1v3h-1zM352,169h1v1h-1zM360,165h1v1h-1zM361,166h1v3h-1zM360,169h1v1h-1zM368,165h1v1h-1zM369,166h1v3h-1zM368,169h1v1h-1zM376,165h1v1h-1zM377,166h1v3h-1zM376,169h1v1h-1zM384,165h1v1h-1zM385,166h1v3h-1zM384,169h1v1h-1zM392,165h1v1h-1zM393,166h1v3h-1zM392,169h1v1h-1zM400,165h1v1h-1zM401,166h1v3h-1zM400,169h1v1h-1zM408,165h1v1h-1zM409,166h1v3h-1zM408,169h1v1h-1zM416,165h1v1h-1zM417,166h1v3h-1zM416,169h1v1h-1zM424,165h1v1h-1zM425,166h1v3h-1zM424,169h1v1h-1zM432,165h1v1h-1zM433,166h1v3h-1zM432,169h1v1h-1zM440,165h1v1h-1zM441,166h1v3h-1zM440,169h1v1h-1zM448,165h1v1h-1zM449,166h1v3h-1zM448,169h1v1h-1zM456,165h1v1h-1zM457,166h1v3h-1zM456,169h1v1h-1zM464,165h1v1h-1zM465,166h1v3h-1zM464,169h1v1h-1zM472,165h1v1h-1zM473,166h1v3h-1zM472,169h1v1h-1zM480,165h1v1h-1zM481,166h1v3h-1zM480,169h1v1h-1zM488,165h1v1h-1zM489,166h1v3h-1zM488,169h1v1h-1zM496,165h1v1h-1zM497,166h1v3h-1zM496,169h1v1h-1zM504,165h1v1h-1zM505,166h1v3h-1zM504,169h1v1h-1zM512,165h1v1h-1zM513,166h1v3h-1zM512,169h1v1h-1zM520,165h1v1h-1zM521,166h1v3h-1zM520,169h1v1h-1zM528,165h1v1h-1zM529,166h1v3h-1zM528,169h1v1h-1zM536,165h1v1h-1zM537,166h1v3h-1zM536,169h1v1h-1zM544,165h1v1h-1zM545,166h1v3h-1zM544,169h1v1h-1zM552,165h1v1h-1zM553,166h1v3h-1zM552,169h1v1h-1zM560,165h1v1h-1zM561,166h1v3h-1zM560,169h1v1h-1zM568,165h1v1h-1zM569,166h1v3h-1zM568,169h1v1h-1zM576,165h1v1h-1zM577,166h1v3h-1zM576,169h1v1h-1zM584,165h1v1h-1zM585,166h1v3h-1zM584,169h1v1h-1zM592,165h1v1h-1zM593,166h1v3h-1zM592,169h1v1h-1zM600,165h1v1h-1zM601,166h1v3h-1zM600,169h1v1h-1zM608,165h1v1h-1zM609,166h1v3h-1zM608,169h1v1h-1zM616,165h1v1h-1zM617,166h1v3h-1zM616,169h1v1h-1zM624,165h1v1h-1zM625,166h1v3h-1zM624,169h1v1h-1zM632,165h1v1h-1zM633,166h1v3h-1zM632,169h1v1h-1zM640,165h1v1h-1zM641,166h1v3h-1zM640,169h1v1h-1zM648,165h1v1h-1zM649,166h1v3h-1zM648,169h1v1h-1zM656,165h1v1h-1zM657,166h1v3h-1zM656,169h1v1h-1zM664,165h1v1h-1zM665,166h1v3h-1zM664,169h1v1h-1zM672,165h1v1h-1zM673,166h1v3h-1zM672,169h1v1h-1zM680,165h1v1h-1zM681,166h1v3h-1zM680,169h1v1h-1zM688,165h1v1h-1zM689,166h1v3h-1zM688,169h1v1h-1zM696,165h1v1h-1zM697,166h1v3h-1zM696,169h1v1h-1zM704,165h1v1h-1zM705,166h1v3h-1zM704,169h1v1h-1zM712,165h1v1h-1zM713,166h1v3h-1zM712,169h1v1h-1zM720,165h1v1h-1zM721,166h1v3h-1zM720,169h1v1h-1zM728,165h1v1h-1zM729,166h1v3h-1zM728,169h1v1h-1zM736,165h1v1h-1zM737,166h1v3h-1zM736,169h1v1h-1zM744,165h1v1h-1zM745,166h1v3h-1zM744,169h1v1h-1zM752,165h1v1h-1zM753,166h1v3h-1zM752,169h1v1h-1zM760,165h1v1h-1zM761,166h1v3h-1zM760,169h1v1h-1zM768,165h1v1h-1zM769,166h1v3h-1zM768,169h1v1h-1zM776,165h1v1h-1zM777,166h1v3h-1zM776,169h1v1h-1zM784,165h1v1h-1zM785,166h1v3h-1zM784,169h1v1h-1zM792,165h1v1h-1zM793,166h1v3h-1zM792,169h1v1h-1zM800,165h1v1h-1zM801,166h1v3h-1zM800,169h1v1h-1zM808,165h1v1h-1zM809,166h1v3h-1zM808,169h1v1h-1zM816,165h1v1h-1zM817,166h1v3h-1zM816,169h1v1h-1zM824,165h1v1h-1zM825,166h1v3h-1zM824,169h1v1h-1zM832,165h1v1h-1zM833,166h1v3h-1zM832,169h1v1h-1zM840,165h1v1h-1zM841,166h1v3h-1zM840,169h1v1h-1zM848,165h1v1h-1zM849,166h1v3h-1zM848,169h1v1h-1zM856,165h1v1h-1zM857,166h1v3h-1zM856,169h1v1h-1zM864,165h1v1h-1zM865,166h1v3h-1zM864,169h1v1h-1zM872,165h1v1h-1zM873,166h1v3h-1zM872,169h1v1h-1zM880,165h1v1h-1zM881,166h1v3h-1zM880,169h1v1h-1zM888,165h1v1h-1zM889,166h1v3h-1zM888,169h1v1h-1zM896,165h1v1h-1zM897,166h1v3h-1zM896,169h1v1h-1zM904,165h1v1h-1zM905,166h1v3h-1zM904,169h1v1h-1zM912,165h1v1h-1zM913,166h1v3h-1zM912,169h1v1h-1zM920,165h1v1h-1zM921,166h1v3h-1zM920,169h1v1h-1zM928,165h1v1h-1zM929,166h1v3h-1zM928,169h1v1h-1zM936,165h1v1h-1zM937,166h1v3h-1zM936,169h1v1h-1zM944,165h1v1h-1zM945,166h1v3h-1zM944,169h1v1h-1z" fill="#0c0c78"/>
<path d="M159,164h1v1h-1zM159,170h1v1h-1zM167,164h1v1h-1zM167,170h1v1h-1zM175,164h1v1h-1zM175,170h1v1h-1zM183,164h1v1h-1zM183,170h1v1h-1zM191,164h1v1h-1zM191,170h1v1h-1zM199,164h1v1h-1zM199,170h1v1h-1zM207,164h1v1h-1zM207,170h1v1h-1zM215,164h1v1h-1zM215,170h1v1h-1zM223,164h1v1h-1zM223,170h1v1h-1zM231,164h1v1h-1zM231,170h1v1h-1zM239,164h1v1h-1zM239,170h1v1h-1zM247,164h1v1h-1zM247,170h1v1h-1zM255,164h1v1h-1zM255,170h1v1h-1zM263,164h1v1h-1zM263,170h1v1h-1zM271,164h1v1h-1zM271,170h1v1h-1zM279,164h1v1h-1zM279,170h1v1h-1zM287,164h1v1h-1zM287,170h1v1h-1zM295,164h1v1h-1zM295,170h1v1h-1zM303,164h1v1h-1zM303,170h1v1h-1zM311,164h1v1h-1zM311,170h1v1h-1zM319,164h1v1h-1zM319,170h1v1h-1zM327,164h1v1h-1zM327,170h1v1h-1zM335,164h1v1h-1zM335,170h1v1h-1zM343,164h1v1h-1zM343,170h1v1h-1zM351,164h1v1h-1zM351,170h1v1h-1zM359,164h1v1h-1zM359,170h1v1h-1zM367,164h1v1h-1zM367,170h1v1h-1zM375,164h1v1h-1zM375,170h1v1h-1zM383,164h1v1h-1zM383,170h1v1h-1zM391,164h1v1h-1zM391,170h1v1h-1zM399,164h1v1h-1zM399,170h1v1h-1zM407,164h1v1h-1zM407,170h1v1h-1zM415,164h1v1h-1zM415,170h1v1h-1zM423,164h1v1h-1zM423,170h1v1h-1zM431,164h1v1h-1zM431,170h1v1h-1zM439,164h1v1h-1zM439,170h1v1h-1zM447,164h1v1h-1zM447,170h1v1h-1zM455,164h1v1h-1zM455,170h1v1h-1zM463,164h1v1h-1zM463,170h1v1h-1zM471,164h1v1h-1zM471,170h1v1h-1zM479,164h1v1h-1zM479,170h1v1h-1zM487,164h1v1h-1zM487,170h1v1h-1zM495,164h1v1h-1zM495,170h1v1h-1zM503,164h1v1h-1zM503,170h1v1h-1zM511,164h1v1h-1zM511,170h1v1h-1zM519,164h1v1h-1zM519,170h1v1h-1zM527,164h1v1h-1zM527,170h1v1h-1zM535,164h1v1h-1zM535,170h1v1h-1zM543,164h1v1h-1zM543,170h1v1h-1zM551,164h1v1h-1zM551,170h1v1h-1zM559,164h1v1h-1zM559,170h1v1h-1zM567,164h1v1h-1zM567,170h1v1h-1zM575,164h1v1h-1zM575,170h1v1h-1zM583,164h1v1h-1zM583,170h1v1h-1zM591,164h1v1h-1zM591,170h1v1h-1zM599,164h1v1h-1zM599,170h1v1h-1zM607,164h1v1h-1zM607,170h1v1h-1zM615,164h1v1h-1zM615,170h1v1h-1zM623,164h1v1h-1zM623,170h1v1h-1zM631,164h1v1h-1zM631,170h1v1h-1zM639,164h1v1h-1zM639,170h1v1h-1zM647,164h1v1h-1zM647,170h1v1h-1zM655,164h1v1h-1zM655,170h1v1h-1zM663,164h1v1h-1zM663,170h1v1h-1zM671,164h1v1h-1zM671,170h1v1h-1zM679,164h1v1h-1zM679,170h1v1h-1zM687,164h1v1h-1zM687,170h1v1h-1zM695,164h1v1h-1zM695,170h1v1h-1zM703,164h1v1h-1zM703,170h1v1h-1zM711,164h1v1h-1zM711,170h1v1h-1zM719,164h1v1h-1zM719,170h1v1h-1zM727,164h1v1h-1zM727,170h1v1h-1zM735,164h1v1h-1zM735,170h1v1h-1zM743,164h1v1h-1zM743,170h1v1h-1zM751,164h1v1h-1zM751,170h1v1h-1zM759,164h1v1h-1zM759,170h1v1h-1zM767,164h1v1h-1zM767,170h1v1h-1zM775,164h1v1h-1zM775,170h1v1h-1zM783,164h1v1h-1zM783,170h1v1h-1zM791,164h1v1h-1zM791,170h1v1h-1zM799,164h1v1h-1zM799,170h1v1h-1zM807,164h1v1h-1zM807,170h1v1h-1zM815,164h1v1h-1zM815,170h1v1h-1zM823,164h1v1h-1zM823,170h1v1h-1zM831,164h1v1h-1zM831,170h1v1h-1zM839,164h1v1h-1zM839,170h1v1h-1zM847,164h1v1h-1zM847,170h1v1h-1zM855,164h1v1h-1zM855,170h1v1h-1zM863,164h1v1h-1zM863,170h1v1h-1zM871,164h1v1h-1zM871,170h1v1h-1zM879,164h1v1h-1zM879,170h1v1h-1zM887,164h1v1h-1zM887,170h1v1h-1zM895,164h1v1h-1zM895,170h1v1h-1zM903,164h1v1h-1zM903,170h1v1h-1zM911,164h1v1h-1zM911,170h1v1h-1zM919,164h1v1h-1zM919,170h1v1h-1zM927,164h1v1h-1zM927,170h1v1h-1zM935,164h1v1h-1zM935,170h1v1h-1zM943,164h1v1h-1zM943,170h1v1h-1z" fill="#0c0c78" fill-opacity="0.45"/>
<path d="M515,0L515,1237L197,1010L197,1180L530,1409L696,1409L696,0Z" fill="#0c0c78" stroke="#0c0c78" stroke-width="15.75" transform="matrix(0.006348,0,0,-0.006792,145,188)"/>
<text x="99 107 118 127 138" y="188" font-size="13" fill="#0c0c78" stroke="#0c0c78" stroke-width="0.1" transform="matrix(1,0,0,1.07,0,-13.160)" >TMEM5</text>
<rect x="157" y="183" width="792" height="1" fill="#0c0c78" />
<path d="M160,181h1v1h-1zM161,182h1v3h-1zM160,185h1v1h-1zM168,181h1v1h-1zM169,182h1v3h-1zM168,185h1v1h-1zM176,181h1v1h-1zM177,182h1v3h-1zM176,185h1v1h-1zM184,181h1v1h-1zM185,182h1v3h-1zM184,185h1v1h-1zM192,181h1v1h-1zM193,182h1v3h-1zM192,185h1v1h-1zM200,181h1v1h-1zM201,182h1v3h-1zM200,185h1v1h-1zM208,181h1v1h-1zM209,182h1v3h-1zM208,185h1v1h-1zM216,181h1v1h-1zM217,182h1v3h-1zM216,185h1v1h-1zM224,181h1v1h-1zM225,182h1v3h-1zM224,185h1v1h-1zM232,181h1v1h-1zM233,182h1v3h-1zM232,185h1v1h-1zM240,181h1v1h-1zM241,182h1v3h-1zM240,185h1v1h-1zM248,181h1v1h-1zM249,182h1v3h-1zM248,185h1v1h-1zM256,181h1v1h-1zM257,182h1v3h-1zM256,185h1v1h-1zM264,181h1v1h-1zM265,182h1v3h-1zM264,185h1v1h-1zM272,181h1v1h-1zM273,182h1v3h-1zM272,185h1v1h-1zM280,181h1v1h-1zM281,182h1v3h-1zM280,185h1v1h-1zM288,181h1v1h-1zM289,182h1v3h-1zM288,185h1v1h-1zM296,181h1v1h-1zM297,182h1v3h-1zM296,185h1v1h-1zM304,181h1v1h-1zM305,182h1v3h-1zM304,185h1v1h-1zM312,181h1v1h-1zM313,182h1v3h-1zM312,185h1v1h-1zM320,181h1v1h-1zM321,182h1v3h-1zM320,185h1v1h-1zM328,181h1v1h-1zM329,182h1v3h-1zM328,185h1v1h-1zM336,181h1v1h-1zM337,182h1v3h-1zM336,185h1v1h-1zM344,181h1v1h-1zM345,182h1v3h-1zM344,185h1v1h-1zM352,181h1v1h-1zM353,182h1v3h-1zM352,185h1v1h-1zM360,181h1v1h-1zM361,182h1v3h-1zM360,185h1v1h-1zM368,181h1v1h-1zM369,182h1v3h-1zM368,185h1v1h-1zM376,181h1v1h-1zM377,182h1v3h-1zM376,185h1v1h-1zM384,181h1v1h-1zM385,182h1v3h-1zM384,185h1v1h-1zM392,181h1v1h-1zM393,182h1v3h-1zM392,185h1v1h-1zM400,181h1v1h-1zM401,182h1v3h-1zM400,185h1v1h-1zM408,181h1v1h-1zM409,182h1v3h-1zM408,185h1v1h-1zM416,181h1v1h-1zM417,182h1v3h-1zM416,185h1v1h-1zM424,181h1v1h-1zM425,182h1v3h-1zM424,185h1v1h-1zM432,181h1v1h-1zM433,182h1v3h-1zM432,185h1v1h-1zM440,181h1v1h-1zM441,182h1v3h-1zM440,185h1v1h-1zM448,181h1v1h-1zM449,182h1v3h-1zM448,185h1v1h-1zM456,181h1v1h-1zM457,182h1v3h-1zM456,185h1v1h-1zM464,181h1v1h-1zM465,182h1v3h-1zM464,185h1v1h-1zM472,181h1v1h-1zM473,182h1v3h-1zM472,185h1v1h-1zM480,181h1v1h-1zM481,182h1v3h-1zM480,185h1v1h-1zM488,181h1v1h-1zM489,182h1v3h-1zM488,185h1v1h-1zM496,181h1v1h-1zM497,182h1v3h-1zM496,185h1v1h-1zM504,181h1v1h-1zM505,182h1v3h-1zM504,185h1v1h-1zM512,181h1v1h-1zM513,182h1v3h-1zM512,185h1v1h-1zM520,181h1v1h-1zM521,182h1v3h-1zM520,185h1v1h-1zM528,181h1v1h-1zM529,182h1v3h-1zM528,185h1v1h-1zM536,181h1v1h-1zM537,182h1v3h-1zM536,185h1v1h-1zM544,181h1v1h-1zM545,182h1v3h-1zM544,185h1v1h-1zM552,181h1v1h-1zM553,182h1v3h-1zM552,185h1v1h-1zM560,181h1v1h-1zM561,182h1v3h-1zM560,185h1v1h-1zM568,181h1v1h-1zM569,182h1v3h-1zM568,185h1v1h-1zM576,181h1v1h-1zM577,182h1v3h-1zM576,185h1v1h-1zM584,181h1v1h-1zM585,182h1v3h-1zM584,185h1v1h-1zM592,181h1v1h-1zM593,182h1v3h-1zM592,185h1v1h-1zM600,181h1v1h-1zM601,182h1v3h-1zM600,185h1v1h-1zM608,181h1v1h-1zM609,182h1v3h-1zM608,185h1v1h-1zM616,181h1v1h-1zM617,182h1v3h-1zM616,185h1v1h-1zM624,181h1v1h-1zM625,182h1v3h-1zM624,185h1v1h-1zM632,181h1v1h-1zM633,182h1v3h-1zM632,185h1v1h-1zM640,181h1v1h-1zM641,182h1v3h-1zM640,185h1v1h-1zM648,181h1v1h-1zM649,182h1v3h-1zM648,185h1v1h-1zM656,181h1v1h-1zM657,182h1v3h-1zM656,185h1v1h-1zM664,181h1v1h-1zM665,182h1v3h-1zM664,185h1v1h-1zM672,181h1v1h-1zM673,182h1v3h-1zM672,185h1v1h-1zM680,181h1v1h-1zM681,182h1v3h-1zM680,185h1v1h-1zM688,181h1v1h-1zM689,182h1v3h-1zM688,185h1v1h-1zM696,181h1v1h-1zM697,182h1v3h-1zM696,185h1v1h-1zM704,181h1v1h-1zM705,182h1v3h-1zM704,185h1v1h-1zM712,181h1v1h-1zM713,182h1v3h-1zM712,185h1v1h-1zM720,181h1v1h-1zM721,182h1v3h-1zM720,185h1v1h-1zM728,181h1v1h-1zM729,182h1v3h-1zM728,185h1v1h-1zM736,181h1v1h-1zM737,182h1v3h-1zM736,185h1v1h-1zM744,181h1v1h-1zM745,182h1v3h-1zM744,185h1v1h-1zM752,181h1v1h-1zM753,182h1v3h-1zM752,185h1v1h-1zM760,181h1v1h-1zM761,182h1v3h-1zM760,185h1v1h-1zM768,181h1v1h-1zM769,182h1v3h-1zM768,185h1v1h-1zM776,181h1v1h-1zM777,182h1v3h-1zM776,185h1v1h-1zM784,181h1v1h-1zM785,182h1v3h-1zM784,185h1v1h-1zM792,181h1v1h-1zM793,182h1v3h-1zM792,185h1v1h-1zM800,181h1v1h-1zM801,182h1v3h-1zM800,185h1v1h-1zM808,181h1v1h-1zM809,182h1v3h-1zM808,185h1v1h-1zM816,181h1v1h-1zM817,182h1v3h-1zM816,185h1v1h-1zM824,181h1v1h-1zM825,182h1v3h-1zM824,185h1v1h-1zM832,181h1v1h-1zM833,182h1v3h-1zM832,185h1v1h-1zM840,181h1v1h-1zM841,182h1v3h-1zM840,185h1v1h-1zM848,181h1v1h-1zM849,182h1v3h-1zM848,185h1v1h-1zM856,181h1v1h-1zM857,182h1v3h-1zM856,185h1v1h-1zM864,181h1v1h-1zM865,182h1v3h-1zM864,185h1v1h-1zM872,181h1v1h-1zM873,182h1v3h-1zM872,185h1v1h-1zM880,181h1v1h-1zM881,182h1v3h-1zM880,185h1v1h-1zM888,181h1v1h-1zM889,182h1v3h-1zM888,185h1v1h-1zM896,181h1v1h-1zM897,182h1v3h-1zM896,185h1v1h-1zM904,181h1v1h-1zM905,182h1v3h-1zM904,185h1v1h-1zM912,181h1v1h-1zM913,182h1v3h-1zM912,185h1v1h-1zM920,181h1v1h-1zM921,182h1v3h-1zM920,185h1v1h-1zM928,181h1v1h-1zM929,182h1v3h-1zM928,185h1v1h-1zM936,181h1v1h-1zM937,182h1v3h-1zM936,185h1v1h-1zM944,181h1v1h-1zM945,182h1v3h-1zM944,185h1v1h-1z" fill="#0c0c78"/>
<path d="M159,180h1v1h-1zM159,186h1v1h-1zM167,180h1v1h-1zM167,186h1v1h-1zM175,180h1v1h-1zM175,186h1v1h-1zM183,180h1v1h-1zM183,186h1v1h-1zM191,180h1v1h-1zM191,186h1v1h-1zM199,180h1v1h-1zM199,186h1v1h-1zM207,180h1v1h-1zM207,186h1v1h-1zM215,180h1v1h-1zM215,186h1v1h-1zM223,180h1v1h-1zM223,186h1v1h-1zM231,180h1v1h-1zM231,186h1v1h-1zM239,180h1v1h-1zM239,186h1v1h-1zM247,180h1v1h-1zM247,186h1v1h-1zM255,180h1v1h-1zM255,186h1v1h-1zM263,180h1v1h-1zM263,186h1v1h-1zM271,180h1v1h-1zM271,186h1v1h-1zM279,180h1v1h-1zM279,186h1v1h-1zM287,180h1v1h-1zM287,186h1v1h-1zM295,180h1v1h-1zM295,186h1v1h-1zM303,180h1v1h-1zM303,186h1v1h-1zM311,180h1v1h-1zM311,186h1v1h-1zM319,180h1v1h-1zM319,186h1v1h-1zM327,180h1v1h-1zM327,186h1v1h-1zM335,180h1v1h-1zM335,186h1v1h-1zM343,180h1v1h-1zM343,186h1v1h-1zM351,180h1v1h-1zM351,186h1v1h-1zM359,180h1v1h-1zM359,186h1v1h-1zM367,180h1v1h-1zM367,186h1v1h-1zM375,180h1v1h-1zM375,186h1v1h-1zM383,180h1v1h-1zM383,186h1v1h-1zM391,180h1v1h-1zM391,186h1v1h-1zM399,180h1v1h-1zM399,186h1v1h-1zM407,180h1v1h-1zM407,186h1v1h-1zM415,180h1v1h-1zM415,186h1v1h-1zM423,180h1v1h-1zM423,186h1v1h-1zM431,180h1v1h-1zM431,186h1v1h-1zM439,180h1v1h-1zM439,186h1v1h-1zM447,180h1v1h-1zM447,186h1v1h-1zM455,180h1v1h-1zM455,186h1v1h-1zM463,180h1v1h-1zM463,186h1v1h-1zM471,180h1v1h-1zM471,186h1v1h-1zM479,180h1v1h-1zM479,186h1v1h-1zM487,180h1v1h-1zM487,186h1v1h-1zM495,180h1v1h-1zM495,186h1v1h-1zM503,180h1v1h-1zM503,186h1v1h-1zM511,180h1v1h-1zM511,186h1v1h-1zM519,180h1v1h-1zM519,186h1v1h-1zM527,180h1v1h-1zM527,186h1v1h-1zM535,180h1v1h-1zM535,186h1v1h-1zM543,180h1v1h-1zM543,186h1v1h-1zM551,180h1v1h-1zM551,186h1v1h-1zM559,180h1v1h-1zM559,186h1v1h-1zM567,180h1v1h-1zM567,186h1v1h-1zM575,180h1v1h-1zM575,186h1v1h-1zM583,180h1v1h-1zM583,186h1v1h-1zM591,180h1v1h-1zM591,186h1v1h-1zM599,180h1v1h-1zM599,186h1v1h-1zM607,180h1v1h-1zM607,186h1v1h-1zM615,180h1v1h-1zM615,186h1v1h-1zM623,180h1v1h-1zM623,186h1v1h-1zM631,180h1v1h-1zM631,186h1v1h-1zM639,180h1v1h-1zM639,186h1v1h-1zM647,180h1v1h-1zM647,186h1v1h-1zM655,180h1v1h-1zM655,186h1v1h-1zM663,180h1v1h-1zM663,186h1v1h-1zM671,180h1v1h-1zM671,186h1v1h-1zM679,180h1v1h-1zM679,186h1v1h-1zM687,180h1v1h-1zM687,186h1v1h-1zM695,180h1v1h-1zM695,186h1v1h-1zM703,180h1v1h-1zM703,186h1v1h-1zM711,180h1v1h-1zM711,186h1v1h-1zM719,180h1v1h-1zM719,186h1v1h-1zM727,180h1v1h-1zM727,186h1v1h-1zM735,180h1v1h-1zM735,186h1v1h-1zM743,180h1v1h-1zM743,186h1v1h-1zM751,180h1v1h-1zM751,186h1v1h-1zM759,180h1v1h-1zM759,186h1v1h-1zM767,180h1v1h-1zM767,186h1v1h-1zM775,180h1v1h-1zM775,186h1v1h-1zM783,180h1v1h-1zM783,186h1v1h-1zM791,180h1v1h-1zM791,186h1v1h-1zM799,180h1v1h-1zM799,186h1v1h-1zM807,180h1v1h-1zM807,186h1v1h-1zM815,180h1v1h-1zM815,186h1v1h-1zM823,180h1v1h-1zM823,186h1v1h-1zM831,180h1v1h-1zM831,186h1v1h-1zM839,180h1v1h-1zM839,186h1v1h-1zM847,180h1v1h-1zM847,186h1v1h-1zM855,180h1v1h-1zM855,186h1v1h-1zM863,180h1v1h-1zM863,186h1v1h-1zM871,180h1v1h-1zM871,186h1v1h-1zM879,180h1v1h-1zM879,186h1v1h-1zM887,180h1v1h-1zM887,186h1v1h-1zM895,180h1v1h-1zM895,186h1v1h-1zM903,180h1v1h-1zM903,186h1v1h-1zM911,180h1v1h-1zM911,186h1v1h-1zM919,180h1v1h-1zM919,186h1v1h-1zM927,180h1v1h-1zM927,186h1v1h-1zM935,180h1v1h-1zM935,186h1v1h-1zM943,180h1v1h-1zM943,186h1v1h-1z" fill="#0c0c78" fill-opacity="0.45"/>
<path d="M515,0L515,1237L197,1010L197,1180L530,1409L696,1409L696,0Z" fill="#0c0c78" stroke="#0c0c78" stroke-width="15.75" transform="matrix(0.006348,0,0,-0.006792,145,204)"/>
<text x="99 107 118 127 138" y="204" font-size="13" fill="#0c0c78" stroke="#0c0c78" stroke-width="0.1" transform="matrix(1,0,0,1.07,0,-14.280)" >TMEM5</text>
<rect x="157" y="199" width="792" height="1" fill="#0c0c78" />
<path d="M160,197h1v1h-1zM161,198h1v3h-1zM160,201h1v1h-1zM168,197h1v1h-1zM169,198h1v3h-1zM168,201h1v1h-1zM176,197h1v1h-1zM177,198h1v3h-1zM176,201h1v1h-1zM184,197h1v1h-1zM185,198h1v3h-1zM184,201h1v1h-1zM192,197h1v1h-1zM193,198h1v3h-1zM192,201h1v1h-1zM200,197h1v1h-1zM201,198h1v3h-1zM200,201h1v1h-1zM208,197h1v1h-1zM209,198h1v3h-1zM208,201h1v1h-1zM216,197h1v1h-1zM217,198h1v3h-1zM216,201h1v1h-1zM224,197h1v1h-1zM225,198h1v3h-1zM224,201h1v1h-1zM232,197h1v1h-1zM233,198h1v3h-1zM232,201h1v1h-1zM240,197h1v1h-1zM241,198h1v3h-1zM240,201h1v1h-1zM248,197h1v1h-1zM249,198h1v3h-1zM248,201h1v1h-1zM256,197h1v1h-1zM257,198h1v3h-1zM256,201h1v1h-1zM264,197h1v1h-1zM265,198h1v3h-1zM264,201h1v1h-1zM272,197h1v1h-1zM273,198h1v3h-1zM272,201h1v1h-1zM280,197h1v1h-1zM281,198h1v3h-1zM280,201h1v1h-1zM288,197h1v1h-1zM289,198h1v3h-1zM288,201h1v1h-1zM296,197h1v1h-1zM297,198h1v3h-1zM296,201h1v1h-1zM304,197h1v1h-1zM305,198h1v3h-1zM304,201h1v1h-1zM312,197h1v1h-1zM313,198h1v3h-1zM312,201h1v1h-1zM320,197h1v1h-1zM321,198h1v3h-1zM320,201h1v1h-1zM328,197h1v1h-1zM329,198h1v3h-1zM328,201h1v1h-1zM336,197h1v1h-1zM337,198h1v3h-1zM336,201h1v1h-1zM344,197h1v1h-1zM345,198h1v3h-1zM344,201h1v1h-1zM352,197h1v1h-1zM353,198h1v3h-1zM352,201h1v1h-1zM360,197h1v1h-1zM361,198h1v3h-1zM360,201h1v1h-1zM368,197h1v1h-1zM369,198h1v3h-1zM368,201h1v1h-1zM376,197h1v1h-1zM377,198h1v3h-1zM376,201h1v1h-1zM384,197h1v1h-1zM385,198h1v3h-1zM384,201h1v1h-1zM392,197h1v1h-1zM393,198h1v3h-1zM392,201h1v1h-1zM400,197h1v1h-1zM401,198h1v3h-1zM400,201h1v1h-1zM408,197h1v1h-1zM409,198h1v3h-1zM408,201h1v1h-1zM416,197h1v1h-1zM417,198h1v3h-1zM416,201h1v1h-1zM424,197h1v1h-1zM425,198h1v3h-1zM424,201h1v1h-1zM432,197h1v1h-1zM433,198h1v3h-1zM432,201h1v1h-1zM440,197h1v1h-1zM441,198h1v3h-1zM440,201h1v1h-1zM448,197h1v1h-1zM449,198h1v3h-1zM448,201h1v1h-1zM456,197h1v1h-1zM457,198h1v3h-1zM456,201h1v1h-1zM464,197h1v1h-1zM465,198h1v3h-1zM464,201h1v1h-1zM472,197h1v1h-1zM473,198h1v3h-1zM472,201h1v1h-1zM480,197h1v1h-1zM481,198h1v3h-1zM480,201h1v1h-1zM488,197h1v1h-1zM489,198h1v3h-1zM488,201h1v1h-1zM496,197h1v1h-1zM497,198h1v3h-1zM496,201h1v1h-1zM504,197h1v1h-1zM505,198h1v3h-1zM504,201h1v1h-1zM512,197h1v1h-1zM513,198h1v3h-1zM512,201h1v1h-1zM520,197h1v1h-1zM521,198h1v3h-1zM520,201h1v1h-1zM528,197h1v1h-1zM529,198h1v3h-1zM528,201h1v1h-1zM536,197h1v1h-1zM537,198h1v3h-1zM536,201h1v1h-1zM544,197h1v1h-1zM545,198h1v3h-1zM544,201h1v1h-1zM552,197h1v1h-1zM553,198h1v3h-1zM552,201h1v1h-1zM560,197h1v1h-1zM561,198h1v3h-1zM560,201h1v1h-1zM568,197h1v1h-1zM569,198h1v3h-1zM568,201h1v1h-1zM576,197h1v1h-1zM577,198h1v3h-1zM576,201h1v1h-1zM584,197h1v1h-1zM585,198h1v3h-1zM584,201h1v1h-1zM592,197h1v1h-1zM593,198h1v3h-1zM592,201h1v1h-1zM600,197h1v1h-1zM601,198h1v3h-1zM600,201h1v1h-1zM608,197h1v1h-1zM609,198h1v3h-1zM608,201h1v1h-1zM616,197h1v1h-1zM617,198h1v3h-1zM616,201h1v1h-1zM624,197h1v1h-1zM625,198h1v3h-1zM624,201h1v1h-1zM632,197h1v1h-1zM633,198h1v3h-1zM632,201h1v1h-1zM640,197h1v1h-1zM641,198h1v3h-1zM640,201h1v1h-1zM648,197h1v1h-1zM649,198h1v3h-1zM648,201h1v1h-1zM656,197h1v1h-1zM657,198h1v3h-1zM656,201h1v1h-1zM664,197h1v1h-1zM665,198h1v3h-1zM664,201h1v1h-1zM672,197h1v1h-1zM673,198h1v3h-1zM672,201h1v1h-1zM680,197h1v1h-1zM681,198h1v3h-1zM680,201h1v1h-1zM688,197h1v1h-1zM689,198h1v3h-1zM688,201h1v1h-1zM696,197h1v1h-1zM697,198h1v3h-1zM696,201h1v1h-1zM704,197h1v1h-1zM705,198h1v3h-1zM704,201h1v1h-1zM712,197h1v1h-1zM713,198h1v3h-1zM712,201h1v1h-1zM720,197h1v1h-1zM721,198h1v3h-1zM720,201h1v1h-1zM728,197h1v1h-1zM729,198h1v3h-1zM728,201h1v1h-1zM736,197h1v1h-1zM737,198h1v3h-1zM736,201h1v1h-1zM744,197h1v1h-1zM745,198h1v3h-1zM744,201h1v1h-1zM752,197h1v1h-1zM753,198h1v3h-1zM752,201h1v1h-1zM760,197h1v1h-1zM761,198h1v3h-1zM760,201h1v1h-1zM768,197h1v1h-1zM769,198h1v3h-1zM768,201h1v1h-1zM776,197h1v1h-1zM777,198h1v3h-1zM776,201h1v1h-1zM784,197h1v1h-1zM785,198h1v3h-1zM784,201h1v1h-1zM792,197h1v1h-1zM793,198h1v3h-1zM792,201h1v1h-1zM800,197h1v1h-1zM801,198h1v3h-1zM800,201h1v1h-1zM808,197h1v1h-1zM809,198h1v3h-1zM808,201h1v1h-1zM816,197h1v1h-1zM817,198h1v3h-1zM816,201h1v1h-1zM824,197h1v1h-1zM825,198h1v3h-1zM824,201h1v1h-1zM832,197h1v1h-1zM833,198h1v3h-1zM832,201h1v1h-1zM840,197h1v1h-1zM841,198h1v3h-1zM840,201h1v1h-1zM848,197h1v1h-1zM849,198h1v3h-1zM848,201h1v1h-1zM856,197h1v1h-1zM857,198h1v3h-1zM856,201h1v1h-1zM864,197h1v1h-1zM865,198h1v3h-1zM864,201h1v1h-1zM872,197h1v1h-1zM873,198h1v3h-1zM872,201h1v1h-1zM880,197h1v1h-1zM881,198h1v3h-1zM880,201h1v1h-1zM888,197h1v1h-1zM889,198h1v3h-1zM888,201h1v1h-1zM896,197h1v1h-1zM897,198h1v3h-1zM896,201h1v1h-1zM904,197h1v1h-1zM905,198h1v3h-1zM904,201h1v1h-1zM912,197h1v1h-1zM913,198h1v3h-1zM912,201h1v1h-1zM920,197h1v1h-1zM921,198h1v3h-1zM920,201h1v1h-1zM928,197h1v1h-1zM929,198h1v3h-1zM928,201h1v1h-1zM936,197h1v1h-1zM937,198h1v3h-1zM936,201h1v1h-1zM944,197h1v1h-1zM945,198h1v3h-1zM944,201h1v1h-1z" fill="#0c0c78"/>
<path d="M159,196h1v1h-1zM159,202h1v1h-1zM167,196h1v1h-1zM167,202h1v1h-1zM175,196h1v1h-1zM175,202h1v1h-1zM183,196h1v1h-1zM183,202h1v1h-1zM191,196h1v1h-1zM191,202h1v1h-1zM199,196h1v1h-1zM199,202h1v1h-1zM207,196h1v1h-1zM207,202h1v1h-1zM215,196h1v1h-1zM215,202h1v1h-1zM223,196h1v1h-1zM223,202h1v1h-1zM231,196h1v1h-1zM231,202h1v1h-1zM239,196h1v1h-1zM239,202h1v1h-1zM247,196h1v1h-1zM247,202h1v1h-1zM255,196h1v1h-1zM255,202h1v1h-1zM263,196h1v1h-1zM263,202h1v1h-1zM271,196h1v1h-1zM271,202h1v1h-1zM279,196h1v1h-1zM279,202h1v1h-1zM287,196h1v1h-1zM287,202h1v1h-1zM295,196h1v1h-1zM295,202h1v1h-1zM303,196h1v1h-1zM303,202h1v1h-1zM311,196h1v1h-1zM311,202h1v1h-1zM319,196h1v1h-1zM319,202h1v1h-1zM327,196h1v1h-1zM327,202h1v1h-1zM335,196h1v1h-1zM335,202h1v1h-1zM343,196h1v1h-1zM343,202h1v1h-1zM351,196h1v1h-1zM351,202h1v1h-1zM359,196h1v1h-1zM359,202h1v1h-1zM367,196h1v1h-1zM367,202h1v1h-1zM375,196h1v1h-1zM375,202h1v1h-1zM383,196h1v1h-1zM383,202h1v1h-1zM391,196h1v1h-1zM391,202h1v1h-1zM399,196h1v1h-1zM399,202h1v1h-1zM407,196h1v1h-1zM407,202h1v1h-1zM415,196h1v1h-1zM415,202h1v1h-1zM423,196h1v1h-1zM423,202h1v1h-1zM431,196h1v1h-1zM431,202h1v1h-1zM439,196h1v1h-1zM439,202h1v1h-1zM447,196h1v1h-1zM447,202h1v1h-1zM455,196h1v1h-1zM455,202h1v1h-1zM463,196h1v1h-1zM463,202h1v1h-1zM471,196h1v1h-1zM471,202h1v1h-1zM479,196h1v1h-1zM479,202h1v1h-1zM487,196h1v1h-1zM487,202h1v1h-1zM495,196h1v1h-1zM495,202h1v1h-1zM503,196h1v1h-1zM503,202h1v1h-1zM511,196h1v1h-1zM511,202h1v1h-1zM519,196h1v1h-1zM519,202h1v1h-1zM527,196h1v1h-1zM527,202h1v1h-1zM535,196h1v1h-1zM535,202h1v1h-1zM543,196h1v1h-1zM543,202h1v1h-1zM551,196h1v1h-1zM551,202h1v1h-1zM559,196h1v1h-1zM559,202h1v1h-1zM567,196h1v1h-1zM567,202h1v1h-1zM575,196h1v1h-1zM575,202h1v1h-1zM583,196h1v1h-1zM583,202h1v1h-1zM591,196h1v1h-1zM591,202h1v1h-1zM599,196h1v1h-1zM599,202h1v1h-1zM607,196h1v1h-1zM607,202h1v1h-1zM615,196h1v1h-1zM615,202h1v1h-1zM623,196h1v1h-1zM623,202h1v1h-1zM631,196h1v1h-1zM631,202h1v1h-1zM639,196h1v1h-1zM639,202h1v1h-1zM647,196h1v1h-1zM647,202h1v1h-1zM655,196h1v1h-1zM655,202h1v1h-1zM663,196h1v1h-1zM663,202h1v1h-1zM671,196h1v1h-1zM671,202h1v1h-1zM679,196h1v1h-1zM679,202h1v1h-1zM687,196h1v1h-1zM687,202h1v1h-1zM695,196h1v1h-1zM695,202h1v1h-1zM703,196h1v1h-1zM703,202h1v1h-1zM711,196h1v1h-1zM711,202h1v1h-1zM719,196h1v1h-1zM719,202h1v1h-1zM727,196h1v1h-1zM727,202h1v1h-1zM735,196h1v1h-1zM735,202h1v1h-1zM743,196h1v1h-1zM743,202h1v1h-1zM751,196h1v1h-1zM751,202h1v1h-1zM759,196h1v1h-1zM759,202h1v1h-1zM767,196h1v1h-1zM767,202h1v1h-1zM775,196h1v1h-1zM775,202h1v1h-1zM783,196h1v1h-1zM783,202h1v1h-1zM791,196h1v1h-1zM791,202h1v1h-1zM799,196h1v1h-1zM799,202h1v1h-1zM807,196h1v1h-1zM807,202h1v1h-1zM815,196h1v1h-1zM815,202h1v1h-1zM823,196h1v1h-1zM823,202h1v1h-1zM831,196h1v1h-1zM831,202h1v1h-1zM839,196h1v1h-1zM839,202h1v1h-1zM847,196h1v1h-1zM847,202h1v1h-1zM855,196h1v1h-1zM855,202h1v1h-1zM863,196h1v1h-1zM863,202h1v1h-1zM871,196h1v1h-1zM871,202h1v1h-1zM879,196h1v1h-1zM879,202h1v1h-1zM887,196h1v1h-1zM887,202h1v1h-1zM895,196h1v1h-1zM895,202h1v1h-1zM903,196h1v1h-1zM903,202h1v1h-1zM911,196h1v1h-1zM911,202h1v1h-1zM919,196h1v1h-1zM919,202h1v1h-1zM927,196h1v1h-1zM927,202h1v1h-1zM935,196h1v1h-1zM935,202h1v1h-1zM943,196h1v1h-1zM943,202h1v1h-1z" fill="#0c0c78" fill-opacity="0.45"/>
<path d="M515,0L515,1237L197,1010L197,1180L530,1409L696,1409L696,0Z" fill="#0c0c78" stroke="#0c0c78" stroke-width="15.75" transform="matrix(0.006348,0,0,-0.006792,145,220)"/>
<text x="99 107 118 127 138" y="220" font-size="13" fill="#0c0c78" stroke="#0c0c78" stroke-width="0.1" transform="matrix(1,0,0,1.07,0,-15.400)" >TMEM5</text>
<rect x="157" y="215" width="792" height="1" fill="#0c0c78" />
<path d="M160,213h1v1h-1zM161,214h1v3h-1zM160,217h1v1h-1zM168,213h1v1h-1zM169,214h1v3h-1zM168,217h1v1h-1zM176,213h1v1h-1zM177,214h1v3h-1zM176,217h1v1h-1zM184,213h1v1h-1zM185,214h1v3h-1zM184,217h1v1h-1zM192,213h1v1h-1zM193,214h1v3h-1zM192,217h1v1h-1zM200,213h1v1h-1zM201,214h1v3h-1zM200,217h1v1h-1zM208,213h1v1h-1zM209,214h1v3h-1zM208,217h1v1h-1zM216,213h1v1h-1zM217,214h1v3h-1zM216,217h1v1h-1zM224,213h1v1h-1zM225,214h1v3h-1zM224,217h1v1h-1zM232,213h1v1h-1zM233,214h1v3h-1zM232,217h1v1h-1zM240,213h1v1h-1zM241,214h1v3h-1zM240,217h1v1h-1zM248,213h1v1h-1zM249,214h1v3h-1zM248,217h1v1h-1zM256,213h1v1h-1zM257,214h1v3h-1zM256,217h1v1h-1zM264,213h1v1h-1zM265,214h1v3h-1zM264,217h1v1h-1zM272,213h1v1h-1zM273,214h1v3h-1zM272,217h1v1h-1zM280,213h1v1h-1zM281,214h1v3h-1zM280,217h1v1h-1zM288,213h1v1h-1zM289,214h1v3h-1zM288,217h1v1h-1zM296,213h1v1h-1zM297,214h1v3h-1zM296,217h1v1h-1zM304,213h1v1h-1zM305,214h1v3h-1zM304,217h1v1h-1zM312,213h1v1h-1zM313,214h1v3h-1zM312,217h1v1h-1zM320,213h1v1h-1zM321,214h1v3h-1zM320,217h1v1h-1zM328,213h1v1h-1zM329,214h1v3h-1zM328,217h1v1h-1zM336,213h1v1h-1zM337,214h1v3h-1zM336,217h1v1h-1zM344,213h1v1h-1zM345,214h1v3h-1zM344,217h1v1h-1zM352,213h1v1h-1zM353,214h1v3h-1zM352,217h1v1h-1zM360,213h1v1h-1zM361,214h1v3h-1zM360,217h1v1h-1zM368,213h1v1h-1zM369,214h1v3h-1zM368,217h1v1h-1zM376,213h1v1h-1zM377,214h1v3h-1zM376,217h1v1h-1zM384,213h1v1h-1zM385,214h1v3h-1zM384,217h1v1h-1zM392,213h1v1h-1zM393,214h1v3h-1zM392,217h1v1h-1zM400,213h1v1h-1zM401,214h1v3h-1zM400,217h1v1h-1zM408,213h1v1h-1zM409,214h1v3h-1zM408,217h1v1h-1zM416,213h1v1h-1zM417,214h1v3h-1zM416,217h1v1h-1zM424,213h1v1h-1zM425,214h1v3h-1zM424,217h1v1h-1zM432,213h1v1h-1zM433,214h1v3h-1zM432,217h1v1h-1zM440,213h1v1h-1zM441,214h1v3h-1zM440,217h1v1h-1zM448,213h1v1h-1zM449,214h1v3h-1zM448,217h1v1h-1zM456,213h1v1h-1zM457,214h1v3h-1zM456,217h1v1h-1zM464,213h1v1h-1zM465,214h1v3h-1zM464,217h1v1h-1zM472,213h1v1h-1zM473,214h1v3h-1zM472,217h1v1h-1zM480,213h1v1h-1zM481,214h1v3h-1zM480,217h1v1h-1zM488,213h1v1h-1zM489,214h1v3h-1zM488,217h1v1h-1zM496,213h1v1h-1zM497,214h1v3h-1zM496,217h1v1h-1zM504,213h1v1h-1zM505,214h1v3h-1zM504,217h1v1h-1zM512,213h1v1h-1zM513,214h1v3h-1zM512,217h1v1h-1zM520,213h1v1h-1zM521,214h1v3h-1zM520,217h1v1h-1zM528,213h1v1h-1zM529,214h1v3h-1zM528,217h1v1h-1zM536,213h1v1h-1zM537,214h1v3h-1zM536,217h1v1h-1zM544,213h1v1h-1zM545,214h1v3h-1zM544,217h1v1h-1zM552,213h1v1h-1zM553,214h1v3h-1zM552,217h1v1h-1zM560,213h1v1h-1zM561,214h1v3h-1zM560,217h1v1h-1zM568,213h1v1h-1zM569,214h1v3h-1zM568,217h1v1h-1zM576,213h1v1h-1zM577,214h1v3h-1zM576,217h1v1h-1zM584,213h1v1h-1zM585,214h1v3h-1zM584,217h1v1h-1zM592,213h1v1h-1zM593,214h1v3h-1zM592,217h1v1h-1zM600,213h1v1h-1zM601,214h1v3h-1zM600,217h1v1h-1zM608,213h1v1h-1zM609,214h1v3h-1zM608,217h1v1h-1zM616,213h1v1h-1zM617,214h1v3h-1zM616,217h1v1h-1zM624,213h1v1h-1zM625,214h1v3h-1zM624,217h1v1h-1zM632,213h1v1h-1zM633,214h1v3h-1zM632,217h1v1h-1zM640,213h1v1h-1zM641,214h1v3h-1zM640,217h1v1h-1zM648,213h1v1h-1zM649,214h1v3h-1zM648,217h1v1h-1zM656,213h1v1h-1zM657,214h1v3h-1zM656,217h1v1h-1zM664,213h1v1h-1zM665,214h1v3h-1zM664,217h1v1h-1zM672,213h1v1h-1zM673,214h1v3h-1zM672,217h1v1h-1zM680,213h1v1h-1zM681,214h1v3h-1zM680,217h1v1h-1zM688,213h1v1h-1zM689,214h1v3h-1zM688,217h1v1h-1zM696,213h1v1h-1zM697,214h1v3h-1zM696,217h1v1h-1zM704,213h1v1h-1zM705,214h1v3h-1zM704,217h1v1h-1zM712,213h1v1h-1zM713,214h1v3h-1zM712,217h1v1h-1zM720,213h1v1h-1zM721,214h1v3h-1zM720,217h1v1h-1zM728,213h1v1h-1zM729,214h1v3h-1zM728,217h1v1h-1zM736,213h1v1h-1zM737,214h1v3h-1zM736,217h1v1h-1zM744,213h1v1h-1zM745,214h1v3h-1zM744,217h1v1h-1zM752,213h1v1h-1zM753,214h1v3h-1zM752,217h1v1h-1zM760,213h1v1h-1zM761,214h1v3h-1zM760,217h1v1h-1zM768,213h1v1h-1zM769,214h1v3h-1zM768,217h1v1h-1zM776,213h1v1h-1zM777,214h1v3h-1zM776,217h1v1h-1zM784,213h1v1h-1zM785,214h1v3h-1zM784,217h1v1h-1zM792,213h1v1h-1zM793,214h1v3h-1zM792,217h1v1h-1zM800,213h1v1h-1zM801,214h1v3h-1zM800,217h1v1h-1zM808,213h1v1h-1zM809,214h1v3h-1zM808,217h1v1h-1zM816,213h1v1h-1zM817,214h1v3h-1zM816,217h1v1h-1zM824,213h1v1h-1zM825,214h1v3h-1zM824,217h1v1h-1zM832,213h1v1h-1zM833,214h1v3h-1zM832,217h1v1h-1zM840,213h1v1h-1zM841,214h1v3h-1zM840,217h1v1h-1zM848,213h1v1h-1zM849,214h1v3h-1zM848,217h1v1h-1zM856,213h1v1h-1zM857,214h1v3h-1zM856,217h1v1h-1zM864,213h1v1h-1zM865,214h1v3h-1zM864,217h1v1h-1zM872,213h1v1h-1zM873,214h1v3h-1zM872,217h1v1h-1zM880,213h1v1h-1zM881,214h1v3h-1zM880,217h1v1h-1zM888,213h1v1h-1zM889,214h1v3h-1zM888,217h1v1h-1zM896,213h1v1h-1zM897,214h1v3h-1zM896,217h1v1h-1zM904,213h1v1h-1zM905,214h1v3h-1zM904,217h1v1h-1zM912,213h1v1h-1zM913,214h1v3h-1zM912,217h1v1h-1zM920,213h1v1h-1zM921,214h1v3h-1zM920,217h1v1h-1zM928,213h1v1h-1zM929,214h1v3h-1zM928,217h1v1h-1zM936,213h1v1h-1zM937,214h1v3h-1zM936,217h1v1h-1zM944,213h1v1h-1zM945,214h1v3h-1zM944,217h1v1h-1z" fill="#0c0c78"/>
<path d="M159,212h1v1h-1zM159,218h1v1h-1zM167,212h1v1h-1zM167,218h1v1h-1zM175,212h1v1h-1zM175,218h1v1h-1zM183,212h1v1h-1zM183,218h1v1h-1zM191,212h1v1h-1zM191,218h1v1h-1zM199,212h1v1h-1zM199,218h1v1h-1zM207,212h1v1h-1zM207,218h1v1h-1zM215,212h1v1h-1zM215,218h1v1h-1zM223,212h1v1h-1zM223,218h1v1h-1zM231,212h1v1h-1zM231,218h1v1h-1zM239,212h1v1h-1zM239,218h1v1h-1zM247,212h1v1h-1zM247,218h1v1h-1zM255,212h1v1h-1zM255,218h1v1h-1zM263,212h1v1h-1zM263,218h1v1h-1zM271,212h1v1h-1zM271,218h1v1h-1zM279,212h1v1h-1zM279,218h1v1h-1zM287,212h1v1h-1zM287,218h1v1h-1zM295,212h1v1h-1zM295,218h1v1h-1zM303,212h1v1h-1zM303,218h1v1h-1zM311,212h1v1h-1zM311,218h1v1h-1zM319,212h1v1h-1zM319,218h1v1h-1zM327,212h1v1h-1zM327,218h1v1h-1zM335,212h1v1h-1zM335,218h1v1h-1zM343,212h1v1h-1zM343,218h1v1h-1zM351,212h1v1h-1zM351,218h1v1h-1zM359,212h1v1h-1zM359,218h1v1h-1zM367,212h1v1h-1zM367,218h1v1h-1zM375,212h1v1h-1zM375,218h1v1h-1zM383,212h1v1h-1zM383,218h1v1h-1zM391,212h1v1h-1zM391,218h1v1h-1zM399,212h1v1h-1zM399,218h1v1h-1zM407,212h1v1h-1zM407,218h1v1h-1zM415,212h1v1h-1zM415,218h1v1h-1zM423,212h1v1h-1zM423,218h1v1h-1zM431,212h1v1h-1zM431,218h1v1h-1zM439,212h1v1h-1zM439,218h1v1h-1zM447,212h1v1h-1zM447,218h1v1h-1zM455,212h1v1h-1zM455,218h1v1h-1zM463,212h1v1h-1zM463,218h1v1h-1zM471,212h1v1h-1zM471,218h1v1h-1zM479,212h1v1h-1zM479,218h1v1h-1zM487,212h1v1h-1zM487,218h1v1h-1zM495,212h1v1h-1zM495,218h1v1h-1zM503,212h1v1h-1zM503,218h1v1h-1zM511,212h1v1h-1zM511,218h1v1h-1zM519,212h1v1h-1zM519,218h1v1h-1zM527,212h1v1h-1zM527,218h1v1h-1zM535,212h1v1h-1zM535,218h1v1h-1zM543,212h1v1h-1zM543,218h1v1h-1zM551,212h1v1h-1zM551,218h1v1h-1zM559,212h1v1h-1zM559,218h1v1h-1zM567,212h1v1h-1zM567,218h1v1h-1zM575,212h1v1h-1zM575,218h1v1h-1zM583,212h1v1h-1zM583,218h1v1h-1zM591,212h1v1h-1zM591,218h1v1h-1zM599,212h1v1h-1zM599,218h1v1h-1zM607,212h1v1h-1zM607,218h1v1h-1zM615,212h1v1h-1zM615,218h1v1h-1zM623,212h1v1h-1zM623,218h1v1h-1zM631,212h1v1h-1zM631,218h1v1h-1zM639,212h1v1h-1zM639,218h1v1h-1zM647,212h1v1h-1zM647,218h1v1h-1zM655,212h1v1h-1zM655,218h1v1h-1zM663,212h1v1h-1zM663,218h1v1h-1zM671,212h1v1h-1zM671,218h1v1h-1zM679,212h1v1h-1zM679,218h1v1h-1zM687,212h1v1h-1zM687,218h1v1h-1zM695,212h1v1h-1zM695,218h1v1h-1zM703,212h1v1h-1zM703,218h1v1h-1zM711,212h1v1h-1zM711,218h1v1h-1zM719,212h1v1h-1zM719,218h1v1h-1zM727,212h1v1h-1zM727,218h1v1h-1zM735,212h1v1h-1zM735,218h1v1h-1zM743,212h1v1h-1zM743,218h1v1h-1zM751,212h1v1h-1zM751,218h1v1h-1zM759,212h1v1h-1zM759,218h1v1h-1zM767,212h1v1h-1zM767,218h1v1h-1zM775,212h1v1h-1zM775,218h1v1h-1zM783,212h1v1h-1zM783,218h1v1h-1zM791,212h1v1h-1zM791,218h1v1h-1zM799,212h1v1h-1zM799,218h1v1h-1zM807,212h1v1h-1zM807,218h1v1h-1zM815,212h1v1h-1zM815,218h1v1h-1zM823,212h1v1h-1zM823,218h1v1h-1zM831,212h1v1h-1zM831,218h1v1h-1zM839,212h1v1h-1zM839,218h1v1h-1zM847,212h1v1h-1zM847,218h1v1h-1zM855,212h1v1h-1zM855,218h1v1h-1zM863,212h1v1h-1zM863,218h1v1h-1zM871,212h1v1h-1zM871,218h1v1h-1zM879,212h1v1h-1zM879,218h1v1h-1zM887,212h1v1h-1zM887,218h1v1h-1zM895,212h1v1h-1zM895,218h1v1h-1zM903,212h1v1h-1zM903,218h1v1h-1zM911,212h1v1h-1zM911,218h1v1h-1zM919,212h1v1h-1zM919,218h1v1h-1zM927,212h1v1h-1zM927,218h1v1h-1zM935,212h1v1h-1zM935,218h1v1h-1zM943,212h1v1h-1zM943,218h1v1h-1z" fill="#0c0c78" fill-opacity="0.45"/>
<text x="491 499 505 508 515 521 527 530 536 542 548 554 560 563 566 570 576 585 588 596 604 611" y="236" font-size="11" fill="#000" stroke="#000" stroke-width="0.1" transform="matrix(1,0,0,1.07,0,-16.520)" >RefSeq genes from NCBI</text>
<text x="60 69 76 80 89 96 103 107 116 123 127 134 138 145" y="251" font-size="13" fill="#0c0c78" stroke="#0c0c78" stroke-width="0.1" transform="matrix(1,0,0,1.07,0,-17.570)" >RefSeq Curated</text>
<rect x="157" y="246" width="792" height="1" fill="#0c0c78" />
<text x="445 452 458 464 466 468 474 480 483 485 491 497 503 506 509 516 522 528 534 540 546 552 558 564 567 569 575 578 585 591 593 599 605 608 610 613 615 621 624 631 635 638 640 646 648 654" y="267" font-size="11" fill="#000" stroke="#000" stroke-width="0.1" transform="matrix(1,0,0,1.07,0,-18.690)" >Publications: Sequences in Scientific Articles</text>
<text x="87 96 103 110 117 124 131 138 145" y="282" font-size="13" fill="#000" stroke="#000" stroke-width="0.1" transform="matrix(1,0,0,1.07,0,-19.740)" >Sequences</text>
<text x="118 127 136 145" y="298" font-size="13" fill="#000" stroke="#000" stroke-width="0.1" transform="matrix(1,0,0,1.07,0,-20.860)" >SNPs</text>
<text x="368 378 389 393 404 408 418 425 432 439 443 452 459 466 473 480 484 491 498 505 512 516 520 524 533 540 544 551 555 565 569 576 583 590 594 603 610 617 621 630 637 641 650 653 660 667 674 681 688 692 699 706 713 720 723 730" y="315" font-size="13" fill="#005400" stroke="#005400" stroke-width="0.1" transform="matrix(1,0,0,1.07,0,-22.050)" >OMIM Gene Phenotypes - Dark Green Can Be Disease-causing</text>
<text x="74 84 95 99 110 114 124 131 138 145" y="329" font-size="13" fill="#005400" stroke="#005400" stroke-width="0.1" transform="matrix(1,0,0,1.07,0,-23.030)" >OMIM Genes</text>
<path d="M515,0L515,1237L197,1010L197,1180L530,1409L696,1409L696,0Z" fill="#000" stroke="#000" stroke-width="18.62" transform="matrix(0.005371,0,0,-0.005747,650,345)"/>
<text x="436 443 449 455 459 462 465 474 480 486 492 495 497 503 506 513 519 523 525 531 537 540 546 549 552 556 562 571 574 580 586 593 601 608 611 615 621 623 629 635 641 647 656 662" y="345" font-size="11" fill="#000" stroke="#000" stroke-width="0.1" transform="matrix(1,0,0,1.07,0,-24.150)" >Short Genetic Variants from dbSNP release 55</text>
<path d="M515,0L515,1237L197,1010L197,1180L530,1409L696,1409L696,0Z" fill="#000" stroke="#000" stroke-width="15.75" transform="matrix(0.006348,0,0,-0.006792,127,359)"/>
<text x="26 35 42 53 64 71 78 82 89 96 105 114 123 134 141 148" y="359" font-size="13" fill="#000" stroke="#000" stroke-width="0.1" transform="matrix(1,0,0,1.07,0,-25.130)" >Common dbSNP(55)</text>
<path d="M515,0L515,1237L197,1010L197,1180L530,1409L696,1409L696,0Z" fill="#000" stroke="#000" stroke-width="15.75" transform="matrix(0.006348,0,0,-0.006792,587,377)"/>
<path d="M515,0L515,1237L197,1010L197,1180L530,1409L696,1409L696,0Z" fill="#000" stroke="#000" stroke-width="15.75" transform="matrix(0.006348,0,0,-0.006792,820,377)"/>
<text x="266 276 283 290 297 301 310 317 324 328 335 342 349 352 359 366 370 373 380 384 391 398 402 406 409 416 423 430 437 444 448 452 456 463 474 478 488 496 505 512 516 525 534 543 547 554 561 568 572 579 583 594 601 608 615 622 626 633 640 651 658 661 668 675 679 683 690 697 704 708 715 722 729 736 740 747 751 755 764 771 775 779 788 795 802 806 813 827 834" y="377" font-size="13" fill="#000" stroke="#000" stroke-width="0.1" transform="matrix(1,0,0,1.07,0,-26.390)" >Gene Expression in 54 tissues from GTEx RNA-seq of 7382 samples, 948 donors (V8, Aug 209)</text>
<rect x="156.5" y="380.5" width="377" height="48" fill="#ffffff" stroke="#e8e8e8" stroke-width="1"/>
<rect x="156" y="404" width="5" height="24" fill="#FFA54F" />
<rect x="163" y="402" width="5" height="26" fill="#EE9A00" />
<rect x="170" y="387" width="5" height="41" fill="#8FBC8F" />
<rect x="177" y="402" width="5" height="26" fill="#8B1C62" />
<rect x="184" y="388" width="5" height="40" fill="#EE6A50" />
<rect x="191" y="390" width="5" height="38" fill="#FF0000" />
<rect x="198" y="385" width="5" height="43" fill="#CDB79E" />
<rect x="205" y="405" width="5" height="23" fill="#EEEE00" />
<rect x="212" y="407" width="5" height="21" fill="#EEEE00" />
<rect x="219" y="406" width="5" height="22" fill="#EEEE00" />
<rect x="226" y="384" width="5" height="44" fill="#EEEE00" />
<rect x="233" y="385" width="5" height="43" fill="#EEEE00" />
<rect x="240" y="407" width="5" height="21" fill="#EEEE00" />
<rect x="247" y="407" width="5" height="21" fill="#EEEE00" />
<rect x="254" y="408" width="5" height="20" fill="#EEEE00" />
<rect x="261" y="412" width="5" height="16" fill="#EEEE00" />
<rect x="268" y="409" width="5" height="19" fill="#EEEE00" />
<rect x="275" y="407" width="5" height="21" fill="#EEEE00" />
<rect x="282" y="408" width="5" height="20" fill="#EEEE00" />
<rect x="289" y="409" width="5" height="19" fill="#EEEE00" />
<rect x="296" y="399" width="5" height="29" fill="#00CDCD" />
<rect x="303" y="407" width="5" height="21" fill="#EE82EE" />
<rect x="310" y="414" width="5" height="14" fill="#9AC0CD" />
<rect x="317" y="388" width="5" height="40" fill="#EED5D2" />
<rect x="324" y="389" width="5" height="39" fill="#EED5D2" />
<rect x="331" y="384" width="5" height="44" fill="#CDB79E" />
<rect x="338" y="388" width="5" height="40" fill="#EEC591" />
<rect x="345" y="393" width="5" height="35" fill="#8B7355" />
<rect x="352" y="389" width="5" height="39" fill="#8B7355" />
<rect x="359" y="396" width="5" height="32" fill="#CDAA7D" />
<rect x="366" y="389" width="5" height="39" fill="#EED5D2" />
<rect x="373" y="410" width="5" height="18" fill="#B452CD" />
<rect x="380" y="412" width="5" height="16" fill="#7A378B" />
<rect x="387" y="384" width="5" height="44" fill="#CDB79E" />
<rect x="394" y="380" width="5" height="48" fill="#CDB79E" />
<rect x="401" y="414" width="5" height="14" fill="#CDB79E" />
<rect x="408" y="387" width="5" height="41" fill="#9ACD32" />
<rect x="415" y="394" width="5" height="34" fill="#CDB79E" />
<rect x="422" y="419" width="5" height="9" fill="#7A67EE" />
<rect x="429" y="395" width="5" height="33" fill="#FFD700" />
<rect x="436" y="381" width="5" height="47" fill="#FFB6C1" />
<rect x="443" y="386" width="5" height="42" fill="#CD9B1D" />
<rect x="450" y="396" width="5" height="32" fill="#B4EEB4" />
<rect x="457" y="385" width="5" height="43" fill="#D9D9D9" />
<rect x="464" y="396" width="5" height="32" fill="#3A5FCD" />
<rect x="471" y="398" width="5" height="30" fill="#1E90FF" />
<rect x="478" y="390" width="5" height="38" fill="#CDB79E" />
<rect x="485" y="397" width="5" height="31" fill="#CDB79E" />
<rect x="492" y="383" width="5" height="45" fill="#FFD39B" />
<rect x="499" y="405" width="5" height="23" fill="#A6A6A6" />
<rect x="506" y="399" width="5" height="29" fill="#008B45" />
<rect x="513" y="396" width="5" height="32" fill="#EED5D2" />
<rect x="520" y="384" width="5" height="44" fill="#EED5D2" />
<rect x="527" y="422" width="5" height="6" fill="#FF00FF" />
<path d="M515,0L515,1237L197,1010L197,1180L530,1409L696,1409L696,0Z" fill="#000" stroke="#000" stroke-width="15.75" transform="matrix(0.006348,0,0,-0.006792,145,411)"/>
<text x="99 107 118 127 138" y="411" font-size="13" fill="#000" stroke="#000" stroke-width="0.1" transform="matrix(1,0,0,1.07,0,-28.770)" >TMEM5</text>
<rect x="156" y="429" width="793" height="2" fill="#0c0c78" />
<text x="281 290 297 306 313 320 329 336 340 351 358 362 369 373 377 387 391 395 402 409 413 421 428 435 442 449 453 462 469 476 480 484 493 500 504 507 514 521 525 534 541 548 555 558 565 569 576 580 587 591 600 603 610 621 628 635 639 646 650 654 661 668 672 679 683 690 697 700 703 707 710 713 720 727 734 738 742 746 753 764 768 777 786 795 805 814" y="446" font-size="13" fill="#000" stroke="#000" stroke-width="0.1" transform="matrix(1,0,0,1.07,0,-31.220)" >H3K27Ac Mark (Often Found Near Active Regulatory Elements) on 7 cell lines from ENCODE</text>
<text x="13 20 27 34 41 45 52 59 63 72 79 88 95 102 111" y="460" font-size="13" fill="#000" stroke="#000" stroke-width="0.1" transform="matrix(1,0,0,1.07,0,-32.200)" >Layered H3K27Ac</text>
<rect x="156" y="476" width="330" height="1" fill="#80d0ff" />
<rect x="486" y="476" width="463" height="1" fill="#88b878" />
<rect x="156" y="477" width="793" height="1" fill="#2c0a30" />
<text x="117 124 128 135 142 146" y="491" font-size="13" fill="#3c3c8c" stroke="#3c3c8c" stroke-width="0.1" transform="matrix(1,0,0,1.07,0,-34.370)" >4.88 _</text>
<path d="M515,0L515,1237L197,1010L197,1180L530,1409L696,1409L696,0Z" fill="#3c3c8c" stroke="#3c3c8c" stroke-width="15.75" transform="matrix(0.006348,0,0,-0.006792,405,492)"/>
<text x="412 419 426 430 437 444 448 452 459 466 470 477 481 488 495 499 508 515 522 529 538 541 548 555 559 568 575 582 589 596 600 607 614 618 621 628 635 639 646 653 657 666 673 680 683 690" y="492" font-size="13" fill="#3c3c8c" stroke="#3c3c8c" stroke-width="0.1" transform="matrix(1,0,0,1.07,0,-34.440)" >00 vertebrates Basewise Conservation by PhyloP</text>
<path d="M515,0L515,1237L197,1010L197,1180L530,1409L696,1409L696,0Z" fill="#3c3c8c" stroke="#3c3c8c" stroke-width="15.75" transform="matrix(0.006348,0,0,-0.006792,13,516)"/>
<text x="20 27 34 38 47 54 58 62 66 70 79 86 93" y="516" font-size="13" fill="#3c3c8c" stroke="#3c3c8c" stroke-width="0.1" transform="matrix(1,0,0,1.07,0,-36.120)" >00 Vert. Cons</text>
<text x="120 124 131 135 142 146" y="541" font-size="13" fill="#8c3c3c" stroke="#8c3c3c" stroke-width="0.1" transform="matrix(1,0,0,1.07,0,-37.870)" >-4.5 _</text>
<rect x="165" y="520" width="37" height="1" fill="#eaffea" />
<rect x="181" y="520" width="6" height="1" fill="#00ff00" />
<rect x="232" y="518" width="38" height="1" fill="#eaffea" />
<rect x="248" y="518" width="6" height="1" fill="#00ff00" />
<rect x="430" y="520" width="38" height="1" fill="#d6ffd6" />
<rect x="446" y="520" width="6" height="2" fill="#00ff00" />
<rect x="892" y="520" width="38" height="1" fill="#eaffea" />
<rect x="908" y="520" width="6" height="1" fill="#00ff00" />
<rect x="298" y="521" width="38" height="1" fill="#00ff00" />
<rect x="314" y="521" width="6" height="11" fill="#00ff00" />
<path d="M300.8,534 L306,532.5 L334,532.5 L340.5,534 L334,535.5 L306,535.5 Z" fill="#fff" stroke="#b4ac3a" stroke-width="0.9"/>
<path d="M300.5,534 L306,532.8 L306,535.2 Z" fill="#aea42c" stroke="#aea42c" stroke-width="0.8"/>
<rect x="630" y="518" width="40" height="1" fill="#dedcaa"/>
<rect x="630" y="518" width="9" height="1" fill="#b4ae3c"/>
<rect x="660" y="518" width="8" height="1" fill="#c4c064"/>
<path d="M562.7,523.5 L578.2,520.6 Q582.7,520.1 587.2,520.6 L602.7,523.5" fill="none" stroke="#ff0000" stroke-width="1.3"/>
<path d="M563.7,523.8 L579.2,522.1 L586.2,522.1 L601.7,523.8" fill="none" stroke="#ff0000" stroke-width="0.9"/>
<path d="M760.9,523.5 L776.1,520.6 Q780.6,520.1 785.1,520.6 L800.3,523.5" fill="none" stroke="#ff0000" stroke-width="1.3"/>
<path d="M761.9,523.8 L777.1,522.1 L784.1,522.1 L799.3,523.8" fill="none" stroke="#ff0000" stroke-width="0.9"/>
<rect x="762" y="525" width="43" height="1" fill="#c8c8ff" />
<rect x="762" y="525" width="8" height="1" fill="#4060ff" />
<rect x="797" y="525" width="8" height="1" fill="#0000ff" />
<path d="M827,521.5 L836,521.5 L838,520.5 L856,520.5 L858,521.5 L867,521.5" fill="none" stroke="#ff2020" stroke-width="1" stroke-opacity="0.85"/>
<path d="M515,0L515,1237L197,1010L197,1180L530,1409L696,1409L696,0Z" fill="#0c0c78" stroke="#0c0c78" stroke-width="15.75" transform="matrix(0.006348,0,0,-0.006792,568,558)"/>
<text x="445 456 463 466 470 473 480 484 493 496 499 506 513 524 531 538 542 549 553 560 564 575 582 589 593 602 609 613 617 624 631 635 642 646 653" y="558" font-size="13" fill="#0c0c78" stroke="#0c0c78" stroke-width="0.1" transform="matrix(1,0,0,1.07,0,-39.060)" >Multiz Alignments of 00 Vertebrates</text>
<text x="121 131 138 145" y="572" font-size="13" fill="#e0860c" stroke="#e0860c" stroke-width="0.1" transform="matrix(1,0,0,1.07,0,-40.040)" >Gaps</text>
<text x="111 120 127 138 145" y="587" font-size="13" fill="#0c0c78" stroke="#0c0c78" stroke-width="0.1" transform="matrix(1,0,0,1.07,0,-41.090)" >Human</text>
<text x="108 117 124 131 138 145" y="602" font-size="13" fill="#0c0c78" stroke="#0c0c78" stroke-width="0.1" transform="matrix(1,0,0,1.07,0,-42.140)" >Rhesus</text>
<text x="113 124 131 138 145" y="617" font-size="13" fill="#005400" stroke="#005400" stroke-width="0.1" transform="matrix(1,0,0,1.07,0,-43.190)" >Mouse</text>
<text x="129 138 145" y="632" font-size="13" fill="#0c0c78" stroke="#0c0c78" stroke-width="0.1" transform="matrix(1,0,0,1.07,0,-44.240)" >Dog</text>
<text x="101 110 113 120 127 134 141 148" y="647" font-size="13" fill="#005400" stroke="#005400" stroke-width="0.1" transform="matrix(1,0,0,1.07,0,-45.290)" >Elephant</text>
<text x="105 114 121 124 131 138 145" y="662" font-size="13" fill="#005400" stroke="#005400" stroke-width="0.1" transform="matrix(1,0,0,1.07,0,-46.340)" >Chicken</text>
<text x="84 93 100 104 108 115 122 125 132 139 142 145" y="677" font-size="13" fill="#0c0c78" stroke="#0c0c78" stroke-width="0.1" transform="matrix(1,0,0,1.07,0,-47.390)" >X_tropicalis</text>
<text x="98 106 113 120 124 131 135 138 145" y="692" font-size="13" fill="#005400" stroke="#005400" stroke-width="0.1" transform="matrix(1,0,0,1.07,0,-48.440)" >Zebrafish</text>
<text x="183" y="587" font-size="13" fill="#0c0c78" stroke="#0c0c78" stroke-width="0.1" transform="matrix(1,0,0,1.07,0,-41.090)" >T</text>
<text x="249" y="587" font-size="13" fill="#0c0c78" stroke="#0c0c78" stroke-width="0.1" transform="matrix(1,0,0,1.07,0,-41.090)" >T</text>
<text x="315" y="587" font-size="13" fill="#0c0c78" stroke="#0c0c78" stroke-width="0.1" transform="matrix(1,0,0,1.07,0,-41.090)" >T</text>
<text x="380" y="587" font-size="13" fill="#0c0c78" stroke="#0c0c78" stroke-width="0.1" transform="matrix(1,0,0,1.07,0,-41.090)" >G</text>
<text x="447" y="587" font-size="13" fill="#0c0c78" stroke="#0c0c78" stroke-width="0.1" transform="matrix(1,0,0,1.07,0,-41.090)" >T</text>
<text x="512" y="587" font-size="13" fill="#0c0c78" stroke="#0c0c78" stroke-width="0.1" transform="matrix(1,0,0,1.07,0,-41.090)" >G</text>
<text x="579" y="587" font-size="13" fill="#0c0c78" stroke="#0c0c78" stroke-width="0.1" transform="matrix(1,0,0,1.07,0,-41.090)" >A</text>
<text x="645" y="587" font-size="13" fill="#0c0c78" stroke="#0c0c78" stroke-width="0.1" transform="matrix(1,0,0,1.07,0,-41.090)" >C</text>
<text x="711" y="587" font-size="13" fill="#0c0c78" stroke="#0c0c78" stroke-width="0.1" transform="matrix(1,0,0,1.07,0,-41.090)" >T</text>
<text x="777" y="587" font-size="13" fill="#0c0c78" stroke="#0c0c78" stroke-width="0.1" transform="matrix(1,0,0,1.07,0,-41.090)" >A</text>
<text x="843" y="587" font-size="13" fill="#0c0c78" stroke="#0c0c78" stroke-width="0.1" transform="matrix(1,0,0,1.07,0,-41.090)" >A</text>
<text x="909" y="587" font-size="13" fill="#0c0c78" stroke="#0c0c78" stroke-width="0.1" transform="matrix(1,0,0,1.07,0,-41.090)" >T</text>
<text x="183" y="602" font-size="13" fill="#0c0c78" stroke="#0c0c78" stroke-width="0.1" transform="matrix(1,0,0,1.07,0,-42.140)" >T</text>
<text x="249" y="602" font-size="13" fill="#0c0c78" stroke="#0c0c78" stroke-width="0.1" transform="matrix(1,0,0,1.07,0,-42.140)" >T</text>
<text x="315" y="602" font-size="13" fill="#0c0c78" stroke="#0c0c78" stroke-width="0.1" transform="matrix(1,0,0,1.07,0,-42.140)" >T</text>
<text x="380" y="602" font-size="13" fill="#0c0c78" stroke="#0c0c78" stroke-width="0.1" transform="matrix(1,0,0,1.07,0,-42.140)" >G</text>
<text x="447" y="602" font-size="13" fill="#0c0c78" stroke="#0c0c78" stroke-width="0.1" transform="matrix(1,0,0,1.07,0,-42.140)" >T</text>
<text x="512" y="602" font-size="13" fill="#0c0c78" stroke="#0c0c78" stroke-width="0.1" transform="matrix(1,0,0,1.07,0,-42.140)" >G</text>
<text x="579" y="602" font-size="13" fill="#0c0c78" stroke="#0c0c78" stroke-width="0.1" transform="matrix(1,0,0,1.07,0,-42.140)" >A</text>
<text x="645" y="602" font-size="13" fill="#0c0c78" stroke="#0c0c78" stroke-width="0.1" transform="matrix(1,0,0,1.07,0,-42.140)" >C</text>
<text x="711" y="602" font-size="13" fill="#0c0c78" stroke="#0c0c78" stroke-width="0.1" transform="matrix(1,0,0,1.07,0,-42.140)" >T</text>
<text x="777" y="602" font-size="13" fill="#0c0c78" stroke="#0c0c78" stroke-width="0.1" transform="matrix(1,0,0,1.07,0,-42.140)" >A</text>
<text x="843" y="602" font-size="13" fill="#0c0c78" stroke="#0c0c78" stroke-width="0.1" transform="matrix(1,0,0,1.07,0,-42.140)" >A</text>
<text x="909" y="602" font-size="13" fill="#0c0c78" stroke="#0c0c78" stroke-width="0.1" transform="matrix(1,0,0,1.07,0,-42.140)" >T</text>
<rect x="183.3" y="612" width="6.6" height="1" fill="#7c7cb4" />
<rect x="183.3" y="615" width="6.6" height="1" fill="#7c7cb4" />
<rect x="249.3" y="612" width="6.6" height="1" fill="#7c7cb4" />
<rect x="249.3" y="615" width="6.6" height="1" fill="#7c7cb4" />
<rect x="315.3" y="612" width="6.6" height="1" fill="#7c7cb4" />
<rect x="315.3" y="615" width="6.6" height="1" fill="#7c7cb4" />
<rect x="381.3" y="612" width="6.6" height="1" fill="#7c7cb4" />
<rect x="381.3" y="615" width="6.6" height="1" fill="#7c7cb4" />
<rect x="447.3" y="612" width="6.6" height="1" fill="#7c7cb4" />
<rect x="447.3" y="615" width="6.6" height="1" fill="#7c7cb4" />
<rect x="513.3" y="612" width="6.6" height="1" fill="#7c7cb4" />
<rect x="513.3" y="615" width="6.6" height="1" fill="#7c7cb4" />
<rect x="579.3" y="612" width="6.6" height="1" fill="#7c7cb4" />
<rect x="579.3" y="615" width="6.6" height="1" fill="#7c7cb4" />
<rect x="645.3" y="612" width="6.6" height="1" fill="#7c7cb4" />
<rect x="645.3" y="615" width="6.6" height="1" fill="#7c7cb4" />
<rect x="711.3" y="612" width="6.6" height="1" fill="#7c7cb4" />
<rect x="711.3" y="615" width="6.6" height="1" fill="#7c7cb4" />
<rect x="777.3" y="612" width="6.6" height="1" fill="#7c7cb4" />
<rect x="777.3" y="615" width="6.6" height="1" fill="#7c7cb4" />
<rect x="843.3" y="612" width="6.6" height="1" fill="#7c7cb4" />
<rect x="843.3" y="615" width="6.6" height="1" fill="#7c7cb4" />
<rect x="909.3" y="612" width="6.6" height="1" fill="#7c7cb4" />
<rect x="909.3" y="615" width="6.6" height="1" fill="#7c7cb4" />
<text x="183" y="632" font-size="13" fill="#0c0c78" stroke="#0c0c78" stroke-width="0.1" transform="matrix(1,0,0,1.07,0,-44.240)" >T</text>
<text x="249" y="632" font-size="13" fill="#0c0c78" stroke="#0c0c78" stroke-width="0.1" transform="matrix(1,0,0,1.07,0,-44.240)" >T</text>
<text x="315" y="632" font-size="13" fill="#8c8cc0" stroke="#8c8cc0" stroke-width="0.1" transform="matrix(1,0,0,1.07,0,-44.240)" >C</text>
<text x="380" y="632" font-size="13" fill="#0c0c78" stroke="#0c0c78" stroke-width="0.1" transform="matrix(1,0,0,1.07,0,-44.240)" >G</text>
<text x="446" y="632" font-size="13" fill="#8c8cc0" stroke="#8c8cc0" stroke-width="0.1" transform="matrix(1,0,0,1.07,0,-44.240)" >G</text>
<text x="512" y="632" font-size="13" fill="#0c0c78" stroke="#0c0c78" stroke-width="0.1" transform="matrix(1,0,0,1.07,0,-44.240)" >G</text>
<text x="579" y="632" font-size="13" fill="#0c0c78" stroke="#0c0c78" stroke-width="0.1" transform="matrix(1,0,0,1.07,0,-44.240)" >A</text>
<text x="645" y="632" font-size="13" fill="#8c8cc0" stroke="#8c8cc0" stroke-width="0.1" transform="matrix(1,0,0,1.07,0,-44.240)" >T</text>
<text x="710" y="632" font-size="13" fill="#8c8cc0" stroke="#8c8cc0" stroke-width="0.1" transform="matrix(1,0,0,1.07,0,-44.240)" >G</text>
<text x="776" y="632" font-size="13" fill="#8c8cc0" stroke="#8c8cc0" stroke-width="0.1" transform="matrix(1,0,0,1.07,0,-44.240)" >G</text>
<text x="843" y="632" font-size="13" fill="#8c8cc0" stroke="#8c8cc0" stroke-width="0.1" transform="matrix(1,0,0,1.07,0,-44.240)" >C</text>
<text x="909" y="632" font-size="13" fill="#8c8cc0" stroke="#8c8cc0" stroke-width="0.1" transform="matrix(1,0,0,1.07,0,-44.240)" >C</text>
<text x="183" y="647" font-size="13" fill="#0c0c78" stroke="#0c0c78" stroke-width="0.1" transform="matrix(1,0,0,1.07,0,-45.290)" >T</text>
<text x="249" y="647" font-size="13" fill="#0c0c78" stroke="#0c0c78" stroke-width="0.1" transform="matrix(1,0,0,1.07,0,-45.290)" >T</text>
<text x="315" y="647" font-size="13" fill="#0c0c78" stroke="#0c0c78" stroke-width="0.1" transform="matrix(1,0,0,1.07,0,-45.290)" >T</text>
<text x="380" y="647" font-size="13" fill="#0c0c78" stroke="#0c0c78" stroke-width="0.1" transform="matrix(1,0,0,1.07,0,-45.290)" >G</text>
<text x="447" y="647" font-size="13" fill="#0c0c78" stroke="#0c0c78" stroke-width="0.1" transform="matrix(1,0,0,1.07,0,-45.290)" >T</text>
<text x="512" y="647" font-size="13" fill="#0c0c78" stroke="#0c0c78" stroke-width="0.1" transform="matrix(1,0,0,1.07,0,-45.290)" >G</text>
<text x="579" y="647" font-size="13" fill="#0c0c78" stroke="#0c0c78" stroke-width="0.1" transform="matrix(1,0,0,1.07,0,-45.290)" >A</text>
<text x="645" y="647" font-size="13" fill="#0c0c78" stroke="#0c0c78" stroke-width="0.1" transform="matrix(1,0,0,1.07,0,-45.290)" >C</text>
<text x="711" y="647" font-size="13" fill="#8c8cc0" stroke="#8c8cc0" stroke-width="0.1" transform="matrix(1,0,0,1.07,0,-45.290)" >A</text>
<text x="776" y="647" font-size="13" fill="#8c8cc0" stroke="#8c8cc0" stroke-width="0.1" transform="matrix(1,0,0,1.07,0,-45.290)" >G</text>
<text x="842" y="647" font-size="13" fill="#8c8cc0" stroke="#8c8cc0" stroke-width="0.1" transform="matrix(1,0,0,1.07,0,-45.290)" >G</text>
<text x="909" y="647" font-size="13" fill="#8c8cc0" stroke="#8c8cc0" stroke-width="0.1" transform="matrix(1,0,0,1.07,0,-45.290)" >A</text>
<rect x="156" y="709" width="793" height="17" fill="#fff" />
<rect x="156" y="710" width="793" height="15" fill="#000" />
<text x="441 450 457 464 471 478 482 485 492 499 503 512 515 522 533 540 547 551 558 562 569 576 580 589 596 603 610 617 621 632 639 646 653 660" y="708" font-size="13" fill="#000" stroke="#000" stroke-width="0.1" transform="matrix(1,0,0,1.07,0,-49.560)" >Repeating Elements by RepeatMasker</text>
<text x="68 77 84 91 98 105 109 120 127 134 141 148" y="722" font-size="13" fill="#000" stroke="#000" stroke-width="0.1" transform="matrix(1,0,0,1.07,0,-50.540)" >RepeatMasker</text>
</svg>
</body></html>
